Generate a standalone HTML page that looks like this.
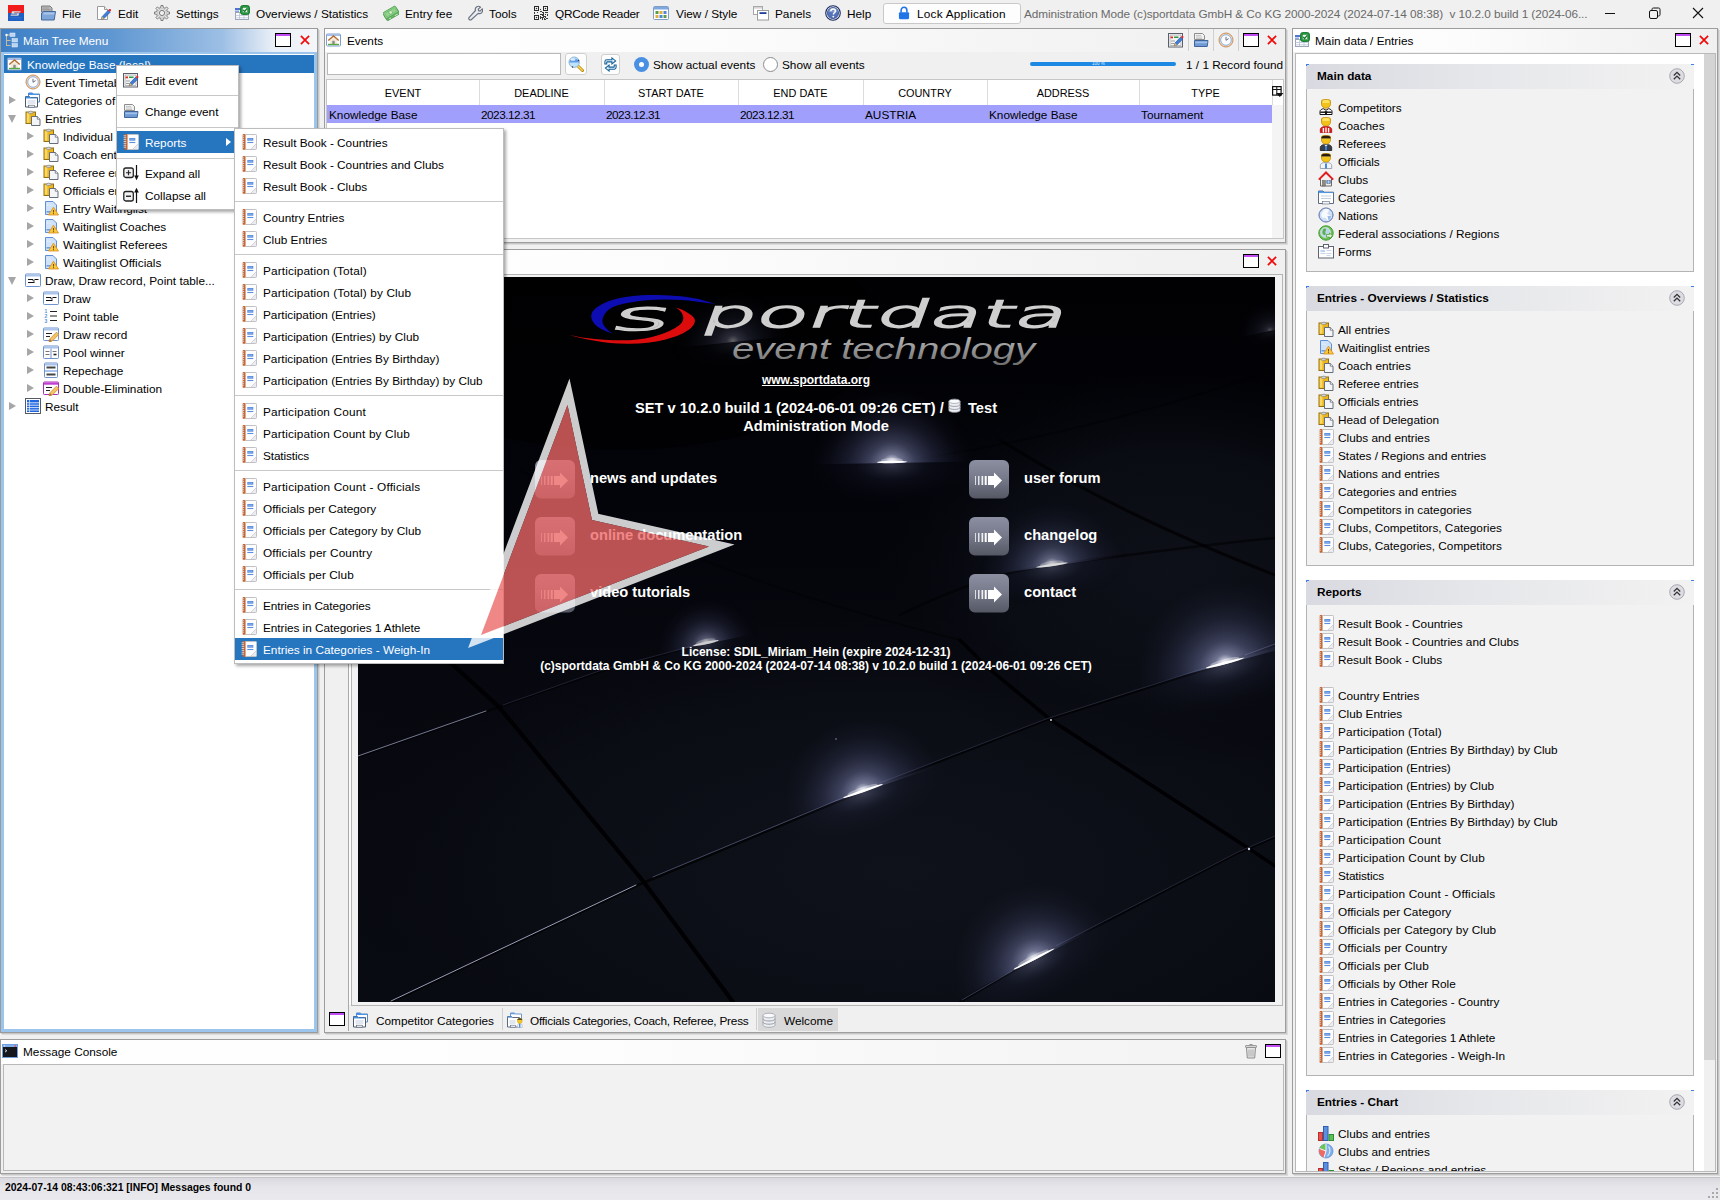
<!DOCTYPE html>
<html lang="en"><head><meta charset="utf-8"><title>sportdata SET</title>
<style>
*{box-sizing:border-box;margin:0;padding:0}
html,body{width:1720px;height:1200px;overflow:hidden;background:#f0f0f0}
body{font-family:"Liberation Sans",sans-serif;font-size:11.8px;color:#000;position:relative;line-height:1}
.a{position:absolute}
.t{position:absolute;white-space:nowrap;line-height:16px;height:16px}
.ic{position:absolute;width:16px;height:16px;overflow:visible}
svg{display:block}
/* top bar */
#top{left:0;top:0;width:1720px;height:28px;background:#f0f0f0}
#lock{left:883px;top:3px;width:138px;height:21px;background:#fdfdfd;border:1px solid #c9c9c9;border-radius:3px}
/* generic panel */
.panel{position:absolute;background:#f0f0f0;border:1px solid #9d9d9d;box-shadow:1px 1px 0 #c6c6c6,2px 2px 0 #dcdcdc}
.hdr{position:absolute;left:0;top:0;right:0;height:23px;background:linear-gradient(90deg,#ffffff 0%,#fcfcfc 40%,#f5f5f5 70%,#f0f0f0 100%)}
.box{position:absolute;background:#fff;border:1px solid #b9b9b9}
/* left tree */
#lp{border-color:#9a9a9a;background:#9cc5ee}
#lp .hdr{background:linear-gradient(90deg,#3d7fc6 0%,#5f97d2 35%,#9dbfe5 70%,#e9eff7 86%,#f4f6f9 100%);height:23px}
#tree{left:3px;top:25px;width:310px;height:976px;background:#fff;border:1px solid #fdfdfd}
.row{position:absolute;left:0;height:18px;width:308px}
.sel{background:#2675bf;color:#fff}
.tw{position:absolute;width:0;height:0}
.tw.r{border-left:7.5px solid #a6a6a6;border-top:4.5px solid transparent;border-bottom:4.5px solid transparent}
.tw.d{border-top:8px solid #a6a6a6;border-left:4.5px solid transparent;border-right:4.5px solid transparent}
/* menus */
.menu{position:absolute;background:#fff;border:1px solid #bdbdbd;box-shadow:2px 2px 3px rgba(0,0,0,.35)}
.mi{position:absolute;left:0;right:0;height:22px}
.mi.hl{background:#2675bf;color:#fff}
.sep{position:absolute;left:0;right:0;height:1px;background:#c8c8c8}
/* events */
.th{position:absolute;top:0;height:25px;line-height:26px;text-align:center;font-size:10.9px}
.td{position:absolute;top:0;height:18px;line-height:18px;white-space:nowrap}
.btn{position:absolute;background:#f7f7f7;border:1px solid #cfcfcf;border-radius:3px}
/* task groups */
.gh{position:absolute;left:12px;width:388px;height:25px;background:linear-gradient(90deg,#d9dae1 0%,#e6e7ea 45%,#f2f2f2 100%);font-weight:bold;font-size:11.8px}
.gb{position:absolute;left:12px;width:388px;background:#f2f2f2;border:1px solid #b4b4b4;border-top:none}
.gi{position:absolute;left:0;height:18px;width:380px}
.cb{position:absolute;width:15px;height:15px}
/* welcome */
#wel{left:358px;top:277px;width:917px;height:725px;background:#04050a;overflow:hidden;color:#fff;font-weight:bold}
.wt{position:absolute;white-space:nowrap;color:#fff;font-weight:bold}
</style></head>
<body>
<svg width="0" height="0" style="position:absolute"><defs><symbol id="i-logo" viewBox="0 0 16 16"><rect x="0" y="0" width="16" height="8" fill="#f11b1b"/><rect x="0" y="8" width="16" height="8" fill="#1f5fc4"/>
<path d="M4 6.2h8.8l-.6 1.3H6.4l-.3.8h5.2l-1 2.4H2.6l.5-1.2h5.8l.3-.8H3.4z" fill="#e8e8ee" stroke="#8a8a9a" stroke-width=".3"/>
<path d="M2 12.5h12M3 14h10" stroke="#4f86dd" stroke-width=".6" stroke-dasharray="1 .6"/></symbol><symbol id="i-folder" viewBox="0 0 16 16"><path d="M1.500 1h8.500l2 2v4h-10.500z" fill="#b9b9b9" stroke="#7d7d7d" stroke-width="1"/>
<path d="M2.500 3h6.500M2.500 4.500h8M2.500 6h8" stroke="#8f8f8f" stroke-width=".7"/>
<path d="M3.500 6.500h12l-1.300 8.500H1.500V8z" fill="#7fa6d8" stroke="#44689a" stroke-width="1" stroke-linejoin="round"/>
<path d="M4 7.500h10.500l-.3 2H3.300z" fill="#a9c6ea"/></symbol><symbol id="i-edit" viewBox="0 0 16 16"><path d="M2.5 1.5h7l3 3v10h-10z" fill="#fff" stroke="#9b9b9b" stroke-width="1"/>
<path d="M9.5 1.5v3h3" fill="#f1f1f1" stroke="#9b9b9b" stroke-width="1"/>
<path d="M13.2 5.2l2 2L9 13.6l-2.6 .8.7-2.7z" fill="#3f7fd8" stroke="#2a5aa8" stroke-width=".7"/>
<path d="M13.2 5.2l.9-.9c.5-.5 1.1-.5 1.6 0s.5 1.1 0 1.6l-.6.9z" fill="#e8232a"/>
<path d="M6.4 14.4l.7-2.7 1.9 1.9z" fill="#f3c77b" stroke="#b98a3a" stroke-width=".4"/></symbol><symbol id="i-gear" viewBox="0 0 16 16"><path d="M13.47 6.82L15.53 6.99L15.53 9.01L13.47 9.18L12.70 11.04L14.04 12.61L12.61 14.04L11.04 12.70L9.18 13.47L9.01 15.53L6.99 15.53L6.82 13.47L4.96 12.70L3.39 14.04L1.96 12.61L3.30 11.04L2.53 9.18L0.47 9.01L0.47 6.99L2.53 6.82L3.30 4.96L1.96 3.39L3.39 1.96L4.96 3.30L6.82 2.53L6.99 0.47L9.01 0.47L9.18 2.53L11.04 3.30L12.61 1.96L14.04 3.39L12.70 4.96Z" fill="#e9e9e9" stroke="#6f6f6f" stroke-width=".9" stroke-linejoin="round"/>
<circle cx="8" cy="8" r="4.300" fill="none" stroke="#b5b5b5" stroke-width=".8"/>
<circle cx="8" cy="8" r="2.600" fill="#f0f0f0" stroke="#6f6f6f" stroke-width=".9"/></symbol><symbol id="i-overview" viewBox="0 0 16 16"><rect x="1.5" y="7.5" width="13" height="7" fill="#fff" stroke="#9aa4b8"/>
<path d="M1.5 10.5h13M1.5 12.8h13M5.5 7.5v7M10 7.5v7" stroke="#b9c3d6" stroke-width=".8"/>
<rect x="1" y="3.2" width="5" height="1.6" fill="#2a55c8"/><rect x="1" y="5.6" width="4" height="1.2" fill="#6f8fdc"/>
<rect x="6.5" y=".5" width="9" height="9" rx="2.2" fill="#1f9a3a" stroke="#0c6a22" stroke-width=".8"/>
<rect x="8.3" y="2.3" width="5.4" height="5.4" fill="#e9f7ea" stroke="#0c6a22" stroke-width=".5"/>
<path d="M9.2 5l1.4 1.5 2.6-3.2" fill="none" stroke="#0f7a28" stroke-width="1.2"/></symbol><symbol id="i-fee" viewBox="0 0 16 16"><g transform="rotate(-30 8 8)"><rect x=".8" y="6" width="14.400" height="7" rx="1" fill="#69b866" stroke="#4a9a4c" stroke-width=".8"/>
<rect x=".8" y="3.800" width="14.400" height="7" rx="1" fill="#93d48e" stroke="#4f9f50" stroke-width=".8"/>
<rect x="2.300" y="5.200" width="11.400" height="4.200" fill="none" stroke="#6ab868" stroke-width=".6"/>
<circle cx="8" cy="7.300" r="1.800" fill="#d5f0d0" stroke="#58aa58" stroke-width=".6"/>
<path d="M3.500 12.300h2M10 12.300h3" stroke="#d5f0d0" stroke-width=".9"/></g></symbol><symbol id="i-tools" viewBox="0 0 16 16"><path d="M10.300 1.200c1.300-.6 3-.4 4 .5l-2.400 2.200.4 1.600 1.600.4 2.200-2.300c.7 1.200.6 2.800-.4 3.900-1 1.100-2.500 1.400-3.800.9L4.600 15c-.7.700-1.700.700-2.400 0s-.7-1.700 0-2.400l6.700-7.300c-.5-1.500.1-3.300 1.400-4.100z" transform="scale(.93) translate(.2 .6)" fill="#e9edf3" stroke="#6c737e" stroke-width="1.250"/></symbol><symbol id="i-qr" viewBox="0 0 16 16"><rect x="1.5" y="1.5" width="4" height="4" fill="#fff" stroke="#2a2a2a" stroke-width="1"/><rect x="2.8" y="2.8" width="1.400" height="1.400" fill="#2a2a2a"/><rect x="10.5" y="1.5" width="4" height="4" fill="#fff" stroke="#2a2a2a" stroke-width="1"/><rect x="11.8" y="2.8" width="1.400" height="1.400" fill="#2a2a2a"/><rect x="1.5" y="10.5" width="4" height="4" fill="#fff" stroke="#2a2a2a" stroke-width="1"/><rect x="2.8" y="11.8" width="1.400" height="1.400" fill="#2a2a2a"/><rect x="7" y="4" width="1" height="1" fill="#3a3a3a"/><rect x="7" y="6" width="1" height="1" fill="#3a3a3a"/><rect x="8" y="6" width="1" height="1" fill="#3a3a3a"/><rect x="1" y="7" width="1" height="1" fill="#3a3a3a"/><rect x="4" y="7" width="1" height="1" fill="#3a3a3a"/><rect x="9" y="7" width="1" height="1" fill="#3a3a3a"/><rect x="10" y="7" width="1" height="1" fill="#3a3a3a"/><rect x="12" y="7" width="1" height="1" fill="#3a3a3a"/><rect x="13" y="7" width="1" height="1" fill="#3a3a3a"/><rect x="14" y="7" width="1" height="1" fill="#3a3a3a"/><rect x="1" y="8" width="1" height="1" fill="#3a3a3a"/><rect x="10" y="8" width="1" height="1" fill="#3a3a3a"/><rect x="7" y="9" width="1" height="1" fill="#3a3a3a"/><rect x="8" y="9" width="1" height="1" fill="#3a3a3a"/><rect x="9" y="9" width="1" height="1" fill="#3a3a3a"/><rect x="10" y="9" width="1" height="1" fill="#3a3a3a"/><rect x="12" y="9" width="1" height="1" fill="#3a3a3a"/><rect x="14" y="9" width="1" height="1" fill="#3a3a3a"/><rect x="9" y="10" width="1" height="1" fill="#3a3a3a"/><rect x="10" y="10" width="1" height="1" fill="#3a3a3a"/><rect x="14" y="10" width="1" height="1" fill="#3a3a3a"/><rect x="7" y="11" width="1" height="1" fill="#3a3a3a"/><rect x="10" y="11" width="1" height="1" fill="#3a3a3a"/><rect x="11" y="11" width="1" height="1" fill="#3a3a3a"/><rect x="12" y="11" width="1" height="1" fill="#3a3a3a"/><rect x="7" y="12" width="1" height="1" fill="#3a3a3a"/><rect x="8" y="12" width="1" height="1" fill="#3a3a3a"/><rect x="9" y="12" width="1" height="1" fill="#3a3a3a"/><rect x="10" y="12" width="1" height="1" fill="#3a3a3a"/><rect x="12" y="12" width="1" height="1" fill="#3a3a3a"/><rect x="7" y="13" width="1" height="1" fill="#3a3a3a"/><rect x="9" y="13" width="1" height="1" fill="#3a3a3a"/><rect x="11" y="13" width="1" height="1" fill="#3a3a3a"/><rect x="13" y="13" width="1" height="1" fill="#3a3a3a"/><rect x="14" y="13" width="1" height="1" fill="#3a3a3a"/><rect x="9" y="14" width="1" height="1" fill="#3a3a3a"/><rect x="11" y="14" width="1" height="1" fill="#3a3a3a"/><rect x="12" y="14" width="1" height="1" fill="#3a3a3a"/></symbol><symbol id="i-view" viewBox="0 0 16 16"><rect x=".5" y="1.5" width="15" height="13" rx="1" fill="#fff" stroke="#7f9cc4"/>
<rect x="1" y="2" width="14" height="2.500" fill="#7fa8e0"/>
<rect x="2.500" y="6" width="3" height="3" fill="#5d9a4a"/><rect x="6.500" y="6" width="3" height="3" fill="#e0b23a"/><rect x="10.500" y="6" width="3" height="3" fill="#4f86d8"/>
<rect x="2.500" y="10" width="3" height="3" fill="#e0b23a"/><rect x="6.500" y="10" width="3" height="3" fill="#4f86d8"/><rect x="10.500" y="10" width="3" height="3" fill="#5d9a4a"/></symbol><symbol id="i-panels" viewBox="0 0 16 16"><rect x=".5" y="1.500" width="9" height="8" fill="#fff" stroke="#a8a8a8"/><rect x="1" y="2" width="8" height="1.600" fill="#d4d4d4"/>
<rect x="4.500" y="5.500" width="11" height="9.500" fill="#fff" stroke="#9a9a9a"/><rect x="6.500" y="7.200" width="7" height="1.800" fill="#1c3f9c"/></symbol><symbol id="i-help" viewBox="0 0 16 16"><circle cx="8" cy="8" r="7.300" fill="#e4e9f4" stroke="#1a2a5c" stroke-width="1.100"/><circle cx="8" cy="8" r="5.600" fill="#5573b8" stroke="#2c4688" stroke-width=".7"/>
<path d="M3.200 6.500a5 5 0 0 1 9.600 0c-2 1.200-7.600 1.200-9.600 0z" fill="#8fa6d8" opacity=".7"/>
<path d="M5.800 6.300c0-1.400 1-2.300 2.300-2.300s2.300.8 2.300 2c0 1.700-2 1.700-2 3.400" fill="none" stroke="#fff" stroke-width="1.500"/><circle cx="8.300" cy="11.600" r=".95" fill="#fff"/></symbol><symbol id="i-lock" viewBox="0 0 16 16"><path d="M4.700 7.500V5c0-2 1.300-3.500 3.300-3.500s3.300 1.500 3.300 3.500v2.500" fill="none" stroke="#1f74e8" stroke-width="1.800"/>
<rect x="2.200" y="7" width="11.600" height="8" rx="1.300" fill="#1f74e8"/></symbol><symbol id="i-treeic" viewBox="0 0 16 16"><path d="M2.500 3v11M2.500 8.500h4M2.500 13.500h4M2.500 3h4" stroke="#c9b9a0" stroke-width="1" fill="none"/>
<circle cx="2.500" cy="3" r="1.200" fill="#fff"/>
<rect x="6" y="1" width="5" height="3.500" fill="#b9d3f3" stroke="#e8f0fb" stroke-width=".5"/>
<rect x="8" y="6.500" width="5.500" height="3.500" fill="#b9d3f3" stroke="#e8f0fb" stroke-width=".5"/>
<rect x="8" y="11.500" width="5.500" height="3.500" fill="#b9d3f3" stroke="#e8f0fb" stroke-width=".5"/></symbol><symbol id="i-home" viewBox="0 0 16 16"><rect x=".5" y="2" width="14" height="12" rx="1" fill="#fff" stroke="#7f9fd0" stroke-width="1"/>
<rect x="1" y="2.300" width="13" height="1.600" fill="#9db9e6"/>
<path d="M2.300 8.500L7.500 4l5.200 4.500" fill="none" stroke="#b26a2e" stroke-width="1.500"/>
<path d="M4 8.200L7.500 5.200 11 8.200V12H4z" fill="#f4e9d8"/>
<rect x="6.300" y="8.800" width="2.400" height="3.200" fill="#8a8a8a"/>
<rect x="2" y="11.800" width="11" height="1.400" fill="#58a844"/></symbol><symbol id="i-clock" viewBox="0 0 16 16"><circle cx="8" cy="8" r="7" fill="#f3dcc2" stroke="#c98f55" stroke-width="1"/>
<circle cx="8" cy="8" r="5.300" fill="#fafcff" stroke="#8fb0e0" stroke-width="1"/>
<path d="M8 4.800V8.300L10.600 6.600" fill="none" stroke="#6a6a7a" stroke-width="1"/></symbol><symbol id="i-cats" viewBox="0 0 16 16"><path d="M3.500 1h4l.8 1H14.500v8h-11z" fill="#fff" stroke="#5f86c0" stroke-width="1"/>
<path d="M3.500 1h4l.8 1.500H3.500z" fill="#3f8fe8"/><path d="M4 2.500h10" stroke="#3f8fe8" stroke-width=".9"/>
<path d="M.5 4.500h4l.8 1H12.500v9.500H.5z" fill="#fff" stroke="#4d586c" stroke-width="1"/>
<path d="M.5 4.500h4l.8 1.500H.5z" fill="#3f8fe8"/><path d="M1 6h11" stroke="#3f8fe8" stroke-width=".9"/>
<path d="M2.500 9h8M2.500 11h8" stroke="#c3cde0" stroke-width="1"/>
<rect x="3.500" y="13.200" width="6" height="2" fill="#f4f6fa" stroke="#4d586c" stroke-width=".6"/></symbol><symbol id="i-clip" viewBox="0 0 16 16"><rect x="1" y="2" width="9.500" height="11.500" fill="#ecb51c" stroke="#94700e" stroke-width="1"/>
<rect x="1.800" y="2.800" width="2.600" height="9.900" fill="#f8d968"/>
<path d="M3.500 2.300c0-1.500 4.500-1.500 4.500 0v.9H3.500z" fill="#e8eaf0" stroke="#777d8a" stroke-width=".7"/>
<path d="M6.500 6.500h5.800l2.700 2.700V15.500H6.500z" fill="#f4f5f8" stroke="#666c78" stroke-width="1"/>
<path d="M12.300 6.500v2.700H15" fill="#fff" stroke="#666c78" stroke-width=".8"/></symbol><symbol id="i-wait" viewBox="0 0 16 16"><path d="M2.500 1.500h7.500l3.500 3.500v9.500h-11z" fill="#cfe2f8" stroke="#5f8fd6" stroke-width="1"/>
<path d="M4 4h3M4 5.500h4" stroke="#e9f2fc" stroke-width=".8" stroke-dasharray="1 .6"/>
<rect x="3.500" y="11" width="4" height="1.600" fill="#6fa0e0"/>
<path d="M10.500 7.200L15.500 15H5.500z" fill="#f8c93a" stroke="#d98a1e" stroke-width=".8" stroke-linejoin="round"/>
<path d="M10.500 10v2.500" stroke="#7a4a10" stroke-width="1.100"/><circle cx="10.500" cy="13.700" r=".6" fill="#7a4a10"/></symbol><symbol id="i-draw" viewBox="0 0 16 16"><rect x=".5" y="2" width="15" height="12.500" rx=".8" fill="#fff" stroke="#6f93cc" stroke-width="1"/>
<rect x="1" y="2.500" width="14" height="2" fill="#a9c4ec"/>
<path d="M3 7.500h5M9.500 7.500h4M3 10.500h4M6.500 10.500h3" stroke="#111" stroke-width="1.200"/>
<path d="M8 7.500v1.500h2" stroke="#111" stroke-width=".8" fill="none"/></symbol><symbol id="i-points" viewBox="0 0 16 16"><path d="M7 3.500h7M7 8h7M7 12.500h7" stroke="#222" stroke-width="1.200"/>
<g font-family="Liberation Sans,sans-serif" font-size="5" font-weight="bold" fill="#5b8fdc"><text x="1.500" y="5">1</text><text x="1.500" y="9.800">2</text><text x="1.500" y="14.500">3</text></g></symbol><symbol id="i-drawrec" viewBox="0 0 16 16"><rect x=".5" y="2" width="15" height="12.500" rx=".8" fill="#fff" stroke="#6f93cc" stroke-width="1"/>
<rect x="1" y="2.500" width="14" height="2" fill="#a9c4ec"/>
<path d="M3 7.500h6M3 10.500h4" stroke="#222" stroke-width="1.200"/>
<g transform="translate(5 6)"><path d="M8.500 .2l2.300 2.300-6.500 6.500-3.300 1 1-3.300z" fill="#f3c466" stroke="#c9892e" stroke-width=".8"/><path d="M1 10l.9-2.900 2 2z" fill="#a8703a"/></g></symbol><symbol id="i-pool" viewBox="0 0 16 16"><rect x=".5" y="2" width="15" height="12.500" rx=".8" fill="#fff" stroke="#6f93cc" stroke-width="1"/>
<rect x="1" y="2.500" width="14" height="2" fill="#a9c4ec"/><path d="M8 4.500v10" stroke="#6f93cc" stroke-width="1"/>
<path d="M2.500 7.500h4M2.500 10.500h4M9.500 7.500h4" stroke="#777" stroke-width="1.200"/><path d="M10.500 10.500h3" stroke="#222" stroke-width="1.600"/></symbol><symbol id="i-repe" viewBox="0 0 16 16"><rect x="1.500" y="1" width="13" height="14.500" rx=".8" fill="#fff" stroke="#6f93cc" stroke-width="1"/>
<rect x="2" y="1.500" width="12" height="2" fill="#a9c4ec"/><rect x="2" y="8" width="12" height="2" fill="#a9c4ec"/>
<path d="M3.500 5.500h9M3.500 12.500h9" stroke="#444" stroke-width="1.800"/></symbol><symbol id="i-delim" viewBox="0 0 16 16"><rect x=".5" y="2" width="15" height="12.500" rx=".8" fill="#fff" stroke="#a62fb8" stroke-width="1"/>
<rect x="1" y="2.500" width="14" height="2.200" fill="#c23fd2"/>
<path d="M3 7.500h6M3 10.500h4" stroke="#222" stroke-width="1.200"/>
<g transform="translate(5 6)"><path d="M8.500 .2l2.300 2.300-6.500 6.500-3.300 1 1-3.300z" fill="#f3c466" stroke="#c9892e" stroke-width=".8"/><path d="M1 10l.9-2.900 2 2z" fill="#a8703a"/></g></symbol><symbol id="i-result" viewBox="0 0 16 16"><rect x=".5" y=".5" width="15" height="15" fill="#fff" stroke="#555b66" stroke-width="1"/>
<rect x="2" y="2" width="12" height="12" fill="#1f66e0"/>
<path d="M2 4.800h12M2 7.200h12M2 9.600h12M2 12h12" stroke="#e6eefc" stroke-width=".9"/><path d="M4.500 2v12" stroke="#e6eefc" stroke-width=".7"/></symbol><symbol id="i-editev" viewBox="0 0 16 16"><rect x=".5" y="1.500" width="14" height="13.500" fill="#fff" stroke="#5a5f68" stroke-width="1"/>
<rect x="2" y="3" width="11" height="10.500" fill="#f4f4f4" stroke="#8a8f98" stroke-width=".6"/>
<rect x="2.500" y="4.500" width="2.500" height="1.800" fill="#e02828"/><rect x="6" y="4.500" width="4.500" height="1.500" fill="#2f9a3f"/>
<path d="M3 9h4M3 11.500h3" stroke="#9a9fa8" stroke-width="1"/>
<g transform="translate(4.500 3.500)"><path d="M8.200 1.600l2 2-5.800 5.800-2.600.8.700-2.700z" fill="#3f7fd8" stroke="#2a5aa8" stroke-width=".7"/><path d="M8.200 1.600l.9-.9c.5-.5 1.100-.5 1.600 0s.5 1.100 0 1.600l-.6.9z" fill="#e8232a"/><path d="M1.800 10.200l.7-2.700 1.900 1.900z" fill="#f3c77b" stroke="#b98a3a" stroke-width=".4"/></g></symbol><symbol id="i-chgev" viewBox="0 0 16 16"><path d="M1.500 1.500h8l2 2v4h-10z" fill="#f1f1f1" stroke="#8d8d8d" stroke-width="1"/>
<path d="M3 3.500h5M3 5h6M3 6.500h6" stroke="#b5b5b5" stroke-width=".7"/>
<path d="M1.500 8.500h13.500l-.8 6H1.500z" fill="#6f9ad4" stroke="#3f659a" stroke-width="1" stroke-linejoin="round"/>
<path d="M2.300 9.500h12l-.2 1.800H2.300z" fill="#9fc0ea"/></symbol><symbol id="i-report" viewBox="0 0 16 16"><rect x="4" y=".5" width="11.500" height="15" rx=".8" fill="#fdfdfd" stroke="#c0c0c5" stroke-width="1"/>
<path d="M15 10.200L10.200 15h4.800z" fill="#ececf0"/><path d="M15.300 9.700L9.700 15.300" stroke="#cfcfd4" stroke-width=".9"/>
<rect x="1.600" y="0" width="2.800" height="15.800" rx=".9" fill="#c9622b"/>
<path d="M.6 1.800h2.500M.6 3.700h2.500M.6 5.600h2.500M.6 7.500h2.500M.6 9.400h2.500M.6 11.300h2.500M.6 13.200h2.500" stroke="#dadada" stroke-width=".9"/>
<rect x="6.300" y="4" width="6" height="2.700" fill="#5b8fe0"/><path d="M7.200 5.350h4.200" stroke="#93b6ee" stroke-width=".8"/>
<path d="M6.300 8.500h6" stroke="#5b8fe0" stroke-width="1.100"/></symbol><symbol id="i-expand" viewBox="0 0 16 16"><rect x=".8" y="3" width="9.500" height="9.500" rx="2" fill="#f2f2f2" stroke="#222" stroke-width="1.300"/>
<path d="M3 7.750h5M5.500 5.250v5" stroke="#222" stroke-width="1.200"/>
<path d="M13.500 0v11.500" stroke="#111" stroke-width="1.200"/><path d="M11.200 10.500h4.600l-2.300 4.700z" fill="#111"/></symbol><symbol id="i-collapse" viewBox="0 0 16 16"><rect x=".8" y="4.500" width="9.500" height="9.500" rx="2" fill="#f2f2f2" stroke="#222" stroke-width="1.300"/>
<path d="M3 9.250h5" stroke="#222" stroke-width="1.400"/>
<path d="M13.500 4.500v11.500" stroke="#111" stroke-width="1.200"/><path d="M11.200 5.500h4.600l-2.300-4.700z" fill="#111"/></symbol><symbol id="i-max" viewBox="0 0 16 14"><rect x=".5" y=".5" width="15" height="13" fill="#fff" stroke="#000" stroke-width="1"/><rect x="1" y="1" width="14" height="2" fill="#c34df5"/><path d="M0 13.600h16" stroke="#000" stroke-width=".5"/></symbol><symbol id="i-x" viewBox="0 0 10 10"><path d="M.9 .9l8.200 8.200M9.100 .9L.9 9.100" stroke="#f20808" stroke-width="1.700" stroke-linecap="butt"/></symbol><symbol id="i-comp" viewBox="0 0 16 16"><path d="M3.500 1.800c0-1.700 9-1.700 9 0v3.400c0 1.600-1.700 4-4.500 4s-4.500-2.400-4.500-4z" fill="#f2c21a" stroke="#c48a08" stroke-width=".8"/>
<path d="M4.600 1.900c.6-1 5.600-1.100 6.800-.1v2.200H4.600z" fill="#fbe15e"/><path d="M2 15.500v-3c0-1.600 2-2.600 3.400-2.800L8 11.300l2.600-1.600c1.400.2 3.400 1.200 3.400 2.800v3z" fill="#fff" stroke="#111" stroke-width="1"/>
<path d="M2.300 13.200h11.400" stroke="#111" stroke-width="1.400"/><path d="M6.600 12.200h2.800l-.5 2.700H7.100z" fill="#111"/></symbol><symbol id="i-coach" viewBox="0 0 16 16"><path d="M3.500 1.800c0-1.700 9-1.700 9 0v3.400c0 1.600-1.700 4-4.500 4s-4.500-2.400-4.500-4z" fill="#f2c21a" stroke="#c48a08" stroke-width=".8"/>
<path d="M4.600 1.900c.6-1 5.600-1.100 6.800-.1v2.200H4.600z" fill="#fbe15e"/><path d="M2.300 15.500v-3c0-1.600 2-2.800 3.400-2.800h4.600c1.400 0 3.400 1.200 3.400 2.800v3z" fill="#e01818" stroke="#b00c0c" stroke-width=".8"/>
<path d="M5.400 11v4.500M8 10.500v5M10.600 11v4.500" stroke="#fff" stroke-width="1.400"/></symbol><symbol id="i-ref" viewBox="0 0 16 16"><path d="M3.500 1.800c0-1.700 9-1.700 9 0v3.400c0 1.600-1.700 4-4.500 4s-4.500-2.400-4.500-4z" fill="#f2c21a" stroke="#c48a08" stroke-width=".8"/>
<path d="M4.600 1.900c.6-1 5.600-1.100 6.800-.1v2.200H4.600z" fill="#fbe15e"/><path d="M3.600 3.400V2.200c0-1.800 8.800-1.800 8.800 0v1.200z" fill="#2a1c0c"/><path d="M2.300 15.500v-3c0-1.600 2-2.800 3.400-2.800h4.600c1.400 0 3.400 1.200 3.400 2.800v3z" fill="#3a3f4a" stroke="#15181f" stroke-width=".8"/>
<path d="M6.200 9.800L8 11.700l1.800-1.900" fill="#e6ebf5"/><path d="M8 11v4.500" stroke="#3f8fe8" stroke-width="1.700"/></symbol><symbol id="i-off" viewBox="0 0 16 16"><path d="M3.500 1.800c0-1.700 9-1.700 9 0v3.400c0 1.600-1.700 4-4.500 4s-4.500-2.400-4.500-4z" fill="#f2c21a" stroke="#c48a08" stroke-width=".8"/>
<path d="M4.600 1.900c.6-1 5.600-1.100 6.800-.1v2.200H4.600z" fill="#fbe15e"/><path d="M3.600 3.400V2.200c0-1.800 8.800-1.800 8.800 0v1.200z" fill="#2a1c0c"/><path d="M2.300 15.500v-3c0-1.600 2-2.800 3.400-2.800h4.600c1.400 0 3.400 1.200 3.400 2.800v3z" fill="#f1f3f8" stroke="#8a90a0" stroke-width=".8"/>
<path d="M8 10.600v4.900" stroke="#2f7fe0" stroke-width="1.800"/></symbol><symbol id="i-club" viewBox="0 0 16 16"><path d="M2.500 8v7h11V8" fill="#f3f1ec" stroke="#6a6a6a" stroke-width="1"/>
<path d="M.8 8.600L8 1.500l7.200 7.100" fill="none" stroke="#e02020" stroke-width="2" stroke-linejoin="miter"/>
<rect x="4.500" y="9.500" width="2.800" height="5.500" fill="#8d8a80" stroke="#5a5850" stroke-width=".5"/>
<rect x="8.800" y="9.500" width="3.500" height="3" fill="#7fa6dc" stroke="#4a6a9a" stroke-width=".6"/><path d="M10.550 9.500v3" stroke="#e9f0fb" stroke-width=".6"/></symbol><symbol id="i-cat1" viewBox="0 0 16 16"><path d="M.5 2h4.500l1 1.200H15.500v11.300H.5z" fill="#fff" stroke="#5d6a80" stroke-width="1"/>
<path d="M.5 2h4.500l1 1.400H.5z" fill="#3f8fe8"/><path d="M1 3.600h14" stroke="#3f8fe8" stroke-width=".8"/>
<path d="M3 7h10M3 9.500h10" stroke="#c3cde0" stroke-width="1.200"/>
<rect x="4.500" y="12.500" width="7" height="2.500" fill="#f4f6fa" stroke="#5d6a80" stroke-width=".6"/></symbol><symbol id="i-nation" viewBox="0 0 16 16"><circle cx="8" cy="8" r="7" fill="#cfe0f6" stroke="#6a7fb0" stroke-width="1"/>
<path d="M8 1.500c2.500.5 3.500 2 2.500 3s-1.500 2-.5 3 3 .5 3 2.500-1.500 3.500-3 3.500-1-2-2.500-2.500-2.500.5-3.500-1S3 6 4.500 5s1-3 3.500-3.500z" fill="#f7fafe"/>
<path d="M9.500 9h3.500c0 2-1 3.500-2.500 4.500z" fill="#9dbbe8"/>
<circle cx="8" cy="8" r="7" fill="none" stroke="#7a8fc0" stroke-width=".6"/></symbol><symbol id="i-fed" viewBox="0 0 16 16"><circle cx="8" cy="8" r="7.200" fill="#6fc05a" stroke="#3f9a30" stroke-width="1"/>
<circle cx="7.500" cy="7.500" r="5" fill="#b8d4ee" stroke="#dff0d8" stroke-width=".6"/>
<path d="M5.500 4c1.500-1 3 0 2.500 1.200S6.500 7 7.500 8s-.5 2.500-1.500 2-2-2-1.500-3.500S4.500 4.800 5.500 4z" fill="#5fae4a"/>
<path d="M8.500 9.500h3V8l3 2.800-3 2.800v-1.500h-3z" fill="#dff3d6" stroke="#3f9a30" stroke-width=".7"/></symbol><symbol id="i-forms" viewBox="0 0 16 16"><rect x=".5" y="3.500" width="15" height="11.500" fill="#fdfdfe" stroke="#5d6370" stroke-width="1"/>
<rect x="5.500" y="1.500" width="5" height="3.500" fill="#fff" stroke="#5d6370" stroke-width="1"/>
<rect x="2.500" y="7" width="4.500" height="2" fill="#bcd5f4"/><path d="M8.500 7.500h5M2.500 10.500h5M8.500 10.500h5M8.500 12.500h4" stroke="#c9d6ea" stroke-width="1"/></symbol><symbol id="i-bars" viewBox="0 0 16 16"><rect x=".5" y="7.500" width="4" height="8" fill="#e8504a" stroke="#b8302a" stroke-width="1"/>
<rect x="5.500" y="1.500" width="4.500" height="14" fill="#5b8fe0" stroke="#2f5fb0" stroke-width="1"/>
<rect x="11" y="9.500" width="4.500" height="6" fill="#5cc05a" stroke="#2f9030" stroke-width="1"/></symbol><symbol id="i-pie" viewBox="0 0 16 16"><circle cx="8" cy="8" r="7" fill="#7fb0ec" stroke="#5a8fd6" stroke-width=".8"/>
<path d="M8 8V1A7 7 0 0 0 1.500 5.500z" fill="#6cc45a"/><path d="M8 8L1.500 5.500A7 7 0 0 0 6 14.700z" fill="#f06a62"/>
<path d="M8 8V1M8 8L1.500 5.500M8 8L6 14.700" stroke="#fff" stroke-width=".9"/>
<path d="M10.500 3.500c2 2 2 7-1 9.500" stroke="#d6e6fa" stroke-width="1.200" fill="none"/></symbol><symbol id="i-search" viewBox="0 0 16 16"><path d="M9.500 9.500l5 5" stroke="#b8860b" stroke-width="3" stroke-linecap="round"/><path d="M9.800 9.800l4.500 4.500" stroke="#ffd34a" stroke-width="1.500" stroke-linecap="round"/>
<circle cx="6.200" cy="6.200" r="5.200" fill="#bfe3f8" stroke="#8fb8dc" stroke-width="1"/>
<path d="M1.300 6.500a5 5 0 0 1 9.800 0z" fill="#4f8fe8" opacity=".85"/>
<ellipse cx="5" cy="3.500" rx="2.500" ry="1.300" fill="#e9f6ff" opacity=".9"/>
<circle cx="10.500" cy="4.500" r=".7" fill="#333"/><circle cx="4.500" cy="11" r=".7" fill="#333"/></symbol><symbol id="i-refresh" viewBox="0 0 16 16"><g fill="#dff1fb" stroke="#135f96" stroke-width="1.100" stroke-linejoin="miter">
<path d="M2 7.500V5c0-1.200.8-2 2-2h5.500V1l4 3.200-4 3.200V5.200H4.500c-.3 0-.5.200-.5.500v1.800z"/>
<path d="M14 8.500v2.500c0 1.200-.8 2-2 2H6.500v2l-4-3.200 4-3.200v2.200h5c.3 0 .5-.2.5-.5V8.500z"/></g></symbol><symbol id="i-colsel" viewBox="0 0 12 12"><rect x=".6" y=".6" width="8.500" height="8.500" fill="#fff" stroke="#111" stroke-width="1.200"/><path d="M.6 3.500h8.500M4.800 .6v8.500" stroke="#111" stroke-width="1"/><path d="M4 7h7.500l-3.750 4z" fill="#111"/></symbol><symbol id="i-console" viewBox="0 0 16 16"><rect x=".5" y="1.500" width="15" height="13" fill="#15171c" stroke="#6f9fe0" stroke-width="1"/>
<rect x="1" y="2" width="14" height="2" fill="#7fb0ee"/><rect x="12.500" y="2.300" width="1.600" height="1.400" fill="#e84a4a"/><rect x="1.800" y="2.500" width="1.200" height="1" fill="#e8f0ff"/>
<path d="M3 6.500l1.800 1.300L3 9.100" stroke="#f0f0f0" stroke-width=".9" fill="none"/></symbol><symbol id="i-trash" viewBox="0 0 16 16"><path d="M3.500 4.500h9l-.8 10.500H4.300z" fill="#e6e6e6" stroke="#8a8a8a" stroke-width="1"/>
<path d="M6 6.500v7M8 6.500v7M10 6.500v7" stroke="#a5a5a5" stroke-width=".9"/>
<rect x="2.500" y="2.500" width="11" height="2" rx=".5" fill="#d6d6d6" stroke="#8a8a8a" stroke-width=".8"/>
<path d="M6 2.500c0-1.500 4-1.500 4 0" fill="none" stroke="#8a8a8a" stroke-width=".9"/></symbol><symbol id="i-db" viewBox="0 0 16 16"><path d="M2 3.500v9.500c0 1.400 2.700 2.300 6 2.300s6-.9 6-2.300V3.500" fill="#eceef2" stroke="#9a9ea8" stroke-width=".8"/>
<ellipse cx="8" cy="3.500" rx="6" ry="2.300" fill="#fafbfd" stroke="#9a9ea8" stroke-width=".8"/>
<path d="M2 6.700c0 1.400 2.700 2.300 6 2.300s6-.9 6-2.300M2 9.900c0 1.400 2.700 2.300 6 2.300s6-.9 6-2.300" fill="none" stroke="#8d919c" stroke-width=".9"/></symbol><symbol id="i-offcat" viewBox="0 0 16 16"><path d="M3.500 1h4l.8 1H14.500v8h-11z" fill="#fff" stroke="#6f96cf" stroke-width="1"/>
<path d="M3.500 1h4l.8 1.300H3.500z" fill="#5b9be0"/>
<path d="M.5 4.500h4l.8 1H12.500v9.500H.5z" fill="#fff" stroke="#5d6a80" stroke-width="1"/>
<path d="M.5 4.500h4l.8 1.300H.5z" fill="#5b9be0"/>
<path d="M2.500 9h6M2.500 11h6" stroke="#c3cde0" stroke-width="1"/>
<rect x="3.500" y="13.200" width="5" height="2" fill="#f4f6fa" stroke="#5d6a80" stroke-width=".6"/>
<path d="M10.500 7.500c0-1.300 4.500-1.300 4.500 0v2c0 1-1 2.200-2.250 2.200s-2.250-1.200-2.250-2.200z" fill="#f4c81e" stroke="#c9930a" stroke-width=".5"/>
<path d="M10.300 7.800c0-1.800 4.900-1.800 4.900 0z" fill="#2a1c0c"/>
<path d="M10.300 15.500v-2c0-1 1-1.800 2.450-1.800s2.450.8 2.450 1.800v2z" fill="#f1f3f8" stroke="#9aa0ae" stroke-width=".5"/><path d="M12.750 12v3.500" stroke="#2f7fe0" stroke-width="1.200"/></symbol></defs></svg>
<div id="top" class="a"></div>
<svg class="ic" style="left:8px;top:5px;width:16px;height:16px" viewBox="0 0 16 16"><use href="#i-logo"/></svg>
<svg class="ic" style="left:40px;top:5px;width:16px;height:16px" viewBox="0 0 16 16"><use href="#i-folder"/></svg>
<div class="t" style="left:62px;top:6px;">File</div>
<svg class="ic" style="left:95px;top:5px;width:16px;height:16px" viewBox="0 0 16 16"><use href="#i-edit"/></svg>
<div class="t" style="left:118px;top:6px;">Edit</div>
<svg class="ic" style="left:154px;top:5px;width:16px;height:16px" viewBox="0 0 16 16"><use href="#i-gear"/></svg>
<div class="t" style="left:176px;top:6px;">Settings</div>
<svg class="ic" style="left:234px;top:5px;width:16px;height:16px" viewBox="0 0 16 16"><use href="#i-overview"/></svg>
<div class="t" style="left:256px;top:6px;">Overviews / Statistics</div>
<svg class="ic" style="left:383px;top:5px;width:16px;height:16px" viewBox="0 0 16 16"><use href="#i-fee"/></svg>
<div class="t" style="left:405px;top:6px;">Entry fee</div>
<svg class="ic" style="left:467px;top:5px;width:16px;height:16px" viewBox="0 0 16 16"><use href="#i-tools"/></svg>
<div class="t" style="left:489px;top:6px;">Tools</div>
<svg class="ic" style="left:533px;top:5px;width:16px;height:16px" viewBox="0 0 16 16"><use href="#i-qr"/></svg>
<div class="t" style="left:555px;top:6px;letter-spacing:-0.269px;">QRCode Reader</div>
<svg class="ic" style="left:653px;top:5px;width:16px;height:16px" viewBox="0 0 16 16"><use href="#i-view"/></svg>
<div class="t" style="left:676px;top:6px;">View / Style</div>
<svg class="ic" style="left:753px;top:5px;width:16px;height:16px" viewBox="0 0 16 16"><use href="#i-panels"/></svg>
<div class="t" style="left:775px;top:6px;">Panels</div>
<svg class="ic" style="left:825px;top:5px;width:16px;height:16px" viewBox="0 0 16 16"><use href="#i-help"/></svg>
<div class="t" style="left:847px;top:6px;">Help</div>
<div id="lock" class="a"></div>
<svg class="ic" style="left:897px;top:6px;width:14px;height:14px" viewBox="0 0 16 16"><use href="#i-lock"/></svg>
<div class="t" style="left:917px;top:6px;letter-spacing:0.219px;">Lock Application</div>
<div class="t" style="left:1024px;top:6px;color:#6a6a6a;white-space:pre;letter-spacing:-.08px">Administration Mode (c)sportdata GmbH &amp; Co KG 2000-2024 (2024-07-14 08:38)  v 10.2.0 build 1 (2024-06...</div>
<svg class="a" style="left:1590px;top:0;width:130px;height:28px" viewBox="0 0 130 28"><path d="M15 13.500h10" stroke="#111" stroke-width="1"/><rect x="59.500" y="10.500" width="8" height="8" rx="1.500" fill="none" stroke="#111" stroke-width="1"/><path d="M62 10.500v-1c0-1 .5-1.500 1.500-1.500h5c1 0 1.500.5 1.500 1.500v5c0 1-.5 1.500-1.500 1.500h-1" fill="none" stroke="#111" stroke-width="1"/><path d="M103 8l10 10M113 8l-10 10" stroke="#111" stroke-width="1.100"/></svg>
<div id="lp" class="panel" style="left:0;top:28px;width:318px;height:1005px"><div class="hdr"></div></div>
<svg class="ic" style="left:4px;top:32px;width:16px;height:16px" viewBox="0 0 16 16"><use href="#i-treeic"/></svg>
<div class="t" style="left:23px;top:33px;color:#fff">Main Tree Menu</div>
<svg class="ic" style="left:275px;top:33px;width:16px;height:14px" viewBox="0 0 16 14"><use href="#i-max"/></svg>
<svg class="ic" style="left:300px;top:35px;width:10px;height:10px" viewBox="0 0 10 10"><use href="#i-x"/></svg>
<div class="a" style="left:4px;top:54px;width:310px;height:975px;background:#fff"></div>
<div class="a sel" style="left:4px;top:55px;width:310px;height:18px"></div>
<svg class="ic" style="left:7px;top:56px;width:16px;height:16px" viewBox="0 0 16 16"><use href="#i-home"/></svg>
<div class="t" style="left:27px;top:57px;color:#fff">Knowledge Base (local)</div>
<svg class="ic" style="left:25px;top:74px;width:16px;height:16px" viewBox="0 0 16 16"><use href="#i-clock"/></svg>
<div class="t" style="left:45px;top:75px;">Event Timetable</div>
<svg class="ic" style="left:25px;top:92px;width:16px;height:16px" viewBox="0 0 16 16"><use href="#i-cats"/></svg>
<div class="t" style="left:45px;top:93px;">Categories of the event</div>
<div class="tw r" style="left:9px;top:96px"></div>
<svg class="ic" style="left:25px;top:110px;width:16px;height:16px" viewBox="0 0 16 16"><use href="#i-clip"/></svg>
<div class="t" style="left:45px;top:111px;">Entries</div>
<div class="tw d" style="left:8px;top:115px"></div>
<svg class="ic" style="left:43px;top:128px;width:16px;height:16px" viewBox="0 0 16 16"><use href="#i-clip"/></svg>
<div class="t" style="left:63px;top:129px;">Individual entries</div>
<div class="tw r" style="left:27px;top:132px"></div>
<svg class="ic" style="left:43px;top:146px;width:16px;height:16px" viewBox="0 0 16 16"><use href="#i-clip"/></svg>
<div class="t" style="left:63px;top:147px;">Coach entries</div>
<div class="tw r" style="left:27px;top:150px"></div>
<svg class="ic" style="left:43px;top:164px;width:16px;height:16px" viewBox="0 0 16 16"><use href="#i-clip"/></svg>
<div class="t" style="left:63px;top:165px;">Referee entries</div>
<div class="tw r" style="left:27px;top:168px"></div>
<svg class="ic" style="left:43px;top:182px;width:16px;height:16px" viewBox="0 0 16 16"><use href="#i-clip"/></svg>
<div class="t" style="left:63px;top:183px;">Officials entries</div>
<div class="tw r" style="left:27px;top:186px"></div>
<svg class="ic" style="left:43px;top:200px;width:16px;height:16px" viewBox="0 0 16 16"><use href="#i-wait"/></svg>
<div class="t" style="left:63px;top:201px;">Entry Waitinglist</div>
<div class="tw r" style="left:27px;top:204px"></div>
<svg class="ic" style="left:43px;top:218px;width:16px;height:16px" viewBox="0 0 16 16"><use href="#i-wait"/></svg>
<div class="t" style="left:63px;top:219px;">Waitinglist Coaches</div>
<div class="tw r" style="left:27px;top:222px"></div>
<svg class="ic" style="left:43px;top:236px;width:16px;height:16px" viewBox="0 0 16 16"><use href="#i-wait"/></svg>
<div class="t" style="left:63px;top:237px;">Waitinglist Referees</div>
<div class="tw r" style="left:27px;top:240px"></div>
<svg class="ic" style="left:43px;top:254px;width:16px;height:16px" viewBox="0 0 16 16"><use href="#i-wait"/></svg>
<div class="t" style="left:63px;top:255px;">Waitinglist Officials</div>
<div class="tw r" style="left:27px;top:258px"></div>
<svg class="ic" style="left:25px;top:272px;width:16px;height:16px" viewBox="0 0 16 16"><use href="#i-draw"/></svg>
<div class="t" style="left:45px;top:273px;">Draw, Draw record, Point table...</div>
<div class="tw d" style="left:8px;top:277px"></div>
<svg class="ic" style="left:43px;top:290px;width:16px;height:16px" viewBox="0 0 16 16"><use href="#i-draw"/></svg>
<div class="t" style="left:63px;top:291px;">Draw</div>
<div class="tw r" style="left:27px;top:294px"></div>
<svg class="ic" style="left:43px;top:308px;width:16px;height:16px" viewBox="0 0 16 16"><use href="#i-points"/></svg>
<div class="t" style="left:63px;top:309px;">Point table</div>
<div class="tw r" style="left:27px;top:312px"></div>
<svg class="ic" style="left:43px;top:326px;width:16px;height:16px" viewBox="0 0 16 16"><use href="#i-drawrec"/></svg>
<div class="t" style="left:63px;top:327px;">Draw record</div>
<div class="tw r" style="left:27px;top:330px"></div>
<svg class="ic" style="left:43px;top:344px;width:16px;height:16px" viewBox="0 0 16 16"><use href="#i-pool"/></svg>
<div class="t" style="left:63px;top:345px;">Pool winner</div>
<div class="tw r" style="left:27px;top:348px"></div>
<svg class="ic" style="left:43px;top:362px;width:16px;height:16px" viewBox="0 0 16 16"><use href="#i-repe"/></svg>
<div class="t" style="left:63px;top:363px;">Repechage</div>
<div class="tw r" style="left:27px;top:366px"></div>
<svg class="ic" style="left:43px;top:380px;width:16px;height:16px" viewBox="0 0 16 16"><use href="#i-delim"/></svg>
<div class="t" style="left:63px;top:381px;">Double-Elimination</div>
<div class="tw r" style="left:27px;top:384px"></div>
<svg class="ic" style="left:25px;top:398px;width:16px;height:16px" viewBox="0 0 16 16"><use href="#i-result"/></svg>
<div class="t" style="left:45px;top:399px;">Result</div>
<div class="tw r" style="left:9px;top:402px"></div>
<div class="panel" style="left:324px;top:28px;width:962px;height:215px"><div class="hdr"></div></div>
<svg class="ic" style="left:326px;top:32px;width:16px;height:16px" viewBox="0 0 16 16"><use href="#i-home"/></svg>
<div class="t" style="left:347px;top:33px;">Events</div>
<svg class="ic" style="left:1168px;top:32px;width:16px;height:16px" viewBox="0 0 16 16"><use href="#i-editev"/></svg>
<svg class="ic" style="left:1193px;top:32px;width:16px;height:16px" viewBox="0 0 16 16"><use href="#i-chgev"/></svg>
<svg class="ic" style="left:1218px;top:32px;width:16px;height:16px" viewBox="0 0 16 16"><use href="#i-clock"/></svg>
<svg class="ic" style="left:1243px;top:33px;width:16px;height:14px" viewBox="0 0 16 14"><use href="#i-max"/></svg>
<svg class="ic" style="left:1267px;top:35px;width:10px;height:10px" viewBox="0 0 10 10"><use href="#i-x"/></svg>
<div class="a" style="left:1188px;top:29px;width:1px;height:22px;background:#cfcfcf"></div>
<div class="a" style="left:1213px;top:29px;width:1px;height:22px;background:#cfcfcf"></div>
<div class="a" style="left:1238px;top:29px;width:1px;height:22px;background:#cfcfcf"></div>
<div class="box" style="left:327px;top:53px;width:234px;height:22px"></div>
<div class="btn" style="left:565px;top:53px;width:22px;height:22px;background:#fdfdfd"></div>
<svg class="ic" style="left:568px;top:56px;width:16px;height:16px" viewBox="0 0 16 16"><use href="#i-search"/></svg>
<div class="btn" style="left:601px;top:54px;width:19px;height:21px;background:#fdfdfd"></div>
<svg class="ic" style="left:603px;top:57px;width:15px;height:15px" viewBox="0 0 16 16"><use href="#i-refresh"/></svg>
<div class="a" style="left:634px;top:57px;width:15px;height:15px;border-radius:50%;background:#4a90e2"></div><div class="a" style="left:639px;top:62px;width:5px;height:5px;border-radius:50%;background:#fff"></div>
<div class="t" style="left:653px;top:57px;">Show actual events</div>
<div class="a" style="left:763px;top:57px;width:15px;height:15px;border-radius:50%;background:#fff;border:1px solid #8c8c8c"></div>
<div class="t" style="left:782px;top:57px;">Show all events</div>
<div class="a" style="left:1030px;top:62px;width:146px;height:4px;border-radius:2px;background:#1e88e5"></div>
<div class="t" style="left:1092px;top:60px;font-size:4.500px;color:#dfeefc;line-height:8px;height:8px">100 %</div>
<div class="t" style="left:1186px;top:57px;">1 / 1 Record found</div>
<div class="box" style="left:326px;top:79px;width:958px;height:160px;border-color:#c6c6c6"></div>
<div class="a" style="left:1272px;top:105px;width:11px;height:133px;background:#f4f4f4"></div>
<div class="a" style="left:327px;top:105px;width:945px;height:18px;background:#a0a0fc"></div>
<div class="th" style="left:327px;top:80px;width:152px">EVENT</div>
<div class="a" style="left:479px;top:80px;width:1px;height:25px;background:#dcdcdc"></div>
<div class="td a" style="left:329px;top:106px;">Knowledge Base</div>
<div class="th" style="left:479px;top:80px;width:125px">DEADLINE</div>
<div class="a" style="left:604px;top:80px;width:1px;height:25px;background:#dcdcdc"></div>
<div class="td a" style="left:481px;top:106px;letter-spacing:-.5px;">2023.12.31</div>
<div class="th" style="left:604px;top:80px;width:134px">START DATE</div>
<div class="a" style="left:738px;top:80px;width:1px;height:25px;background:#dcdcdc"></div>
<div class="td a" style="left:606px;top:106px;letter-spacing:-.5px;">2023.12.31</div>
<div class="th" style="left:738px;top:80px;width:125px">END DATE</div>
<div class="a" style="left:863px;top:80px;width:1px;height:25px;background:#dcdcdc"></div>
<div class="td a" style="left:740px;top:106px;letter-spacing:-.5px;">2023.12.31</div>
<div class="th" style="left:863px;top:80px;width:124px">COUNTRY</div>
<div class="a" style="left:987px;top:80px;width:1px;height:25px;background:#dcdcdc"></div>
<div class="td a" style="left:865px;top:106px;">AUSTRIA</div>
<div class="th" style="left:987px;top:80px;width:152px">ADDRESS</div>
<div class="a" style="left:1139px;top:80px;width:1px;height:25px;background:#dcdcdc"></div>
<div class="td a" style="left:989px;top:106px;">Knowledge Base</div>
<div class="th" style="left:1139px;top:80px;width:133px">TYPE</div>
<div class="a" style="left:1272px;top:80px;width:1px;height:25px;background:#dcdcdc"></div>
<div class="td a" style="left:1141px;top:106px;">Tournament</div>
<svg class="ic" style="left:1272px;top:86px;width:12px;height:12px" viewBox="0 0 12 12"><use href="#i-colsel"/></svg>
<div class="panel" style="left:324px;top:249px;width:962px;height:784px"><div class="hdr" style="height:24px"></div></div>
<svg class="ic" style="left:1243px;top:254px;width:16px;height:14px" viewBox="0 0 16 14"><use href="#i-max"/></svg>
<svg class="ic" style="left:1267px;top:256px;width:10px;height:10px" viewBox="0 0 10 10"><use href="#i-x"/></svg>
<div class="a" style="left:348px;top:274px;width:1px;height:757px;background:#a9a9a9"></div>
<div class="a" style="left:349px;top:274px;width:2px;height:731px;background:#fcfcfc"></div>
<div class="a" style="left:351px;top:274px;width:932px;height:732px;border:1px solid #b5b5b5;background:#f2f2f2"></div>
<svg class="ic" style="left:329px;top:1012px;width:16px;height:14px" viewBox="0 0 16 14"><use href="#i-max"/></svg>
<div class="a" style="left:758px;top:1008px;width:80px;height:23px;background:#d9d9d9"></div>
<svg class="ic" style="left:353px;top:1012px;width:16px;height:16px" viewBox="0 0 16 16"><use href="#i-cats"/></svg>
<div class="t" style="left:376px;top:1013px;">Competitor Categories</div>
<div class="a" style="left:502px;top:1008px;width:1px;height:22px;background:#cfcfcf"></div>
<svg class="ic" style="left:507px;top:1012px;width:16px;height:16px" viewBox="0 0 16 16"><use href="#i-offcat"/></svg>
<div class="t" style="left:530px;top:1013px;letter-spacing:-.22px">Officials Categories, Coach, Referee, Press</div>
<div class="a" style="left:756px;top:1008px;width:1px;height:22px;background:#cfcfcf"></div>
<svg class="ic" style="left:761px;top:1012px;width:16px;height:16px" viewBox="0 0 16 16"><use href="#i-db"/></svg>
<div class="t" style="left:784px;top:1013px;">Welcome</div>
<svg class="a" style="left:358px;top:277px;width:917px;height:725px" viewBox="358 277 917 725"><defs>
<radialGradient id="gl"><stop offset="0" stop-color="#fff" stop-opacity=".95"/><stop offset=".04" stop-color="#eef0ff" stop-opacity=".8"/><stop offset=".11" stop-color="#c0c6f0" stop-opacity=".5"/><stop offset=".28" stop-color="#9aa2da" stop-opacity=".31"/><stop offset=".55" stop-color="#7880be" stop-opacity=".15"/><stop offset=".78" stop-color="#646eaa" stop-opacity=".05"/><stop offset="1" stop-color="#50588a" stop-opacity="0"/></radialGradient>
<radialGradient id="gl2"><stop offset="0" stop-color="#aab0e0" stop-opacity=".5"/><stop offset=".4" stop-color="#4a5288" stop-opacity=".18"/><stop offset="1" stop-color="#10142a" stop-opacity="0"/></radialGradient>
<radialGradient id="sheen" cx=".5" cy=".5" r=".5"><stop offset="0" stop-color="#10121b"/><stop offset=".6" stop-color="#0b0d15"/><stop offset="1" stop-color="#05060b" stop-opacity="0"/></radialGradient>
<linearGradient id="fade" x1="0" y1="0" x2="0" y2="1"><stop offset="0" stop-color="#010103"/><stop offset=".3" stop-color="#03040a"/><stop offset=".55" stop-color="#07080f"/><stop offset="1" stop-color="#0a0c14"/></linearGradient>
<linearGradient id="silver" x1="0" y1="0" x2="0" y2="1"><stop offset="0" stop-color="#f2f2f2"/><stop offset=".5" stop-color="#c9c9c9"/><stop offset="1" stop-color="#9a9a9a"/></linearGradient>
<linearGradient id="grey2" x1="0" y1="0" x2="0" y2="1"><stop offset="0" stop-color="#bdbdbd"/><stop offset="1" stop-color="#6f6f6f"/></linearGradient>
<linearGradient id="btn" x1="0" y1="0" x2="0" y2="1"><stop offset="0" stop-color="#8b8fa1"/><stop offset=".45" stop-color="#777b8c"/><stop offset="1" stop-color="#555864"/></linearGradient>
<clipPath id="up"><rect x="-200" y="-200" width="400" height="201"/></clipPath>
</defs><rect x="358" y="277" width="917" height="725" fill="url(#fade)"/><ellipse cx="900" cy="870" rx="640" ry="290" fill="url(#sheen)"/><ellipse cx="1170" cy="570" rx="300" ry="200" fill="url(#sheen)" opacity=".85"/><ellipse cx="620" cy="330" rx="260" ry="120" fill="#000" opacity=".5"/><g fill="none" stroke="#010103" stroke-linecap="round"><path d="M400 630L452 664L499 707L643 881L733 1002" stroke-width="4"/><path d="M960 640L987 667L1051 720L1248 848L1278 868" stroke-width="3.500"/><path d="M358 757L499 707L599 672L706 643" stroke-width="2" opacity=".7"/><path d="M391 1002L638 885L863 791L1046 720L1225 663L1275 645" stroke-width="2.500" opacity=".8"/><path d="M960 1002L1034 959L1238 853L1275 837" stroke-width="2.500" opacity=".8"/><path d="M1000 440C1080 490 1160 530 1275 575" stroke-width="3" opacity=".75"/><path d="M1275 538C1200 545 1130 555 1052 565C1000 572 950 590 900 615" stroke-width="2.500" opacity=".6"/><path d="M892 462C980 452 1130 420 1275 370" stroke-width="2" opacity=".5"/><path d="M520 470C640 540 760 590 960 640" stroke-width="2" opacity=".5"/></g><g fill="none" stroke-width="1" stroke-linecap="round"><path d="M358 756L486 711" stroke="#9aa0c0" stroke-opacity=".75"/><path d="M503 705L599 671L700 644" stroke="#4a5070" stroke-opacity=".4"/><path d="M391 1001L636 885" stroke="#b4b9d6" stroke-opacity=".85"/><path d="M653 877L845 797" stroke="#6a7095" stroke-opacity=".6"/><path d="M880 783L1046 719L1205 668" stroke="#4a5070" stroke-opacity=".45"/><path d="M1245 655L1275 644" stroke="#6a7095" stroke-opacity=".5"/><path d="M962 1000L1012 971" stroke="#6a7095" stroke-opacity=".5"/><path d="M1056 946L1238 852L1275 836" stroke="#4a5070" stroke-opacity=".45"/></g><circle cx="1051" cy="720" r="1" fill="#cfd3ea"/><circle cx="1249" cy="849" r="1.200" fill="#cfd3ea"/><circle cx="836" cy="739" r=".8" fill="#8d93b5"/><g transform="translate(892 462) rotate(-1)" opacity="1.0"><ellipse cx="0" cy="3" rx="90" ry="40" fill="url(#gl2)" opacity=".55"/><g clip-path="url(#up)"><ellipse cx="0" cy="0" rx="79" ry="72" fill="url(#gl)"/></g><ellipse cx="0" cy="-1.500" rx="11" ry="2.500" fill="#fff" opacity=".35"/><ellipse cx="0" cy="0" rx="15" ry="1.200" fill="#fff"/></g><g transform="translate(733 341) rotate(-6)" opacity="0.4"><ellipse cx="0" cy="3" rx="65" ry="29" fill="url(#gl2)" opacity=".55"/><g clip-path="url(#up)"><ellipse cx="0" cy="0" rx="57" ry="52" fill="url(#gl)"/></g></g><g transform="translate(1052 565) rotate(-8)" opacity="0.85"><ellipse cx="0" cy="3" rx="80" ry="35" fill="url(#gl2)" opacity=".55"/><g clip-path="url(#up)"><ellipse cx="0" cy="0" rx="70" ry="64" fill="url(#gl)"/></g><ellipse cx="0" cy="-1.500" rx="12" ry="2.500" fill="#fff" opacity=".35"/><ellipse cx="0" cy="0" rx="16" ry="1.200" fill="#fff"/></g><g transform="translate(1225 663) rotate(-15)" opacity="1.0"><ellipse cx="0" cy="3" rx="100" ry="44" fill="url(#gl2)" opacity=".55"/><g clip-path="url(#up)"><ellipse cx="0" cy="0" rx="88" ry="80" fill="url(#gl)"/></g><ellipse cx="0" cy="-1.500" rx="15" ry="2.500" fill="#fff" opacity=".35"/><ellipse cx="0" cy="0" rx="20" ry="1.200" fill="#fff"/></g><g transform="translate(863 791) rotate(-19)" opacity="1.0"><ellipse cx="0" cy="3" rx="90" ry="40" fill="url(#gl2)" opacity=".55"/><g clip-path="url(#up)"><ellipse cx="0" cy="0" rx="79" ry="72" fill="url(#gl)"/></g><ellipse cx="0" cy="-1.500" rx="16" ry="2.500" fill="#fff" opacity=".35"/><ellipse cx="0" cy="0" rx="21" ry="1.200" fill="#fff"/></g><g transform="translate(1034 959) rotate(-27)" opacity="1.0"><ellipse cx="0" cy="3" rx="92" ry="41" fill="url(#gl2)" opacity=".55"/><g clip-path="url(#up)"><ellipse cx="0" cy="0" rx="81" ry="74" fill="url(#gl)"/></g><ellipse cx="0" cy="-1.500" rx="17" ry="2.500" fill="#fff" opacity=".35"/><ellipse cx="0" cy="0" rx="23" ry="1.200" fill="#fff"/></g><g transform="translate(706 643) rotate(-12)" opacity="0.8"><ellipse cx="0" cy="3" rx="55" ry="24" fill="url(#gl2)" opacity=".55"/><g clip-path="url(#up)"><ellipse cx="0" cy="0" rx="48" ry="44" fill="url(#gl)"/></g><ellipse cx="0" cy="-1.500" rx="10" ry="2.500" fill="#fff" opacity=".35"/><ellipse cx="0" cy="0" rx="13" ry="1.200" fill="#fff"/></g><g transform="translate(1270 330) rotate(-12)" opacity="0.3"><ellipse cx="0" cy="3" rx="38" ry="16" fill="url(#gl2)" opacity=".55"/><g clip-path="url(#up)"><ellipse cx="0" cy="0" rx="33" ry="30" fill="url(#gl)"/></g></g><g transform="translate(565 600) rotate(-20)" opacity="0.25"><ellipse cx="0" cy="3" rx="38" ry="16" fill="url(#gl2)" opacity=".55"/><g clip-path="url(#up)"><ellipse cx="0" cy="0" rx="33" ry="30" fill="url(#gl)"/></g></g><path d="M715.800 304.200C700 298.500 688 296.800 676.300 296C664 295 652 294.800 641.400 295.200C630 295.800 620 297.500 612.300 300.100C600 304 591 310 591.200 316.400C591.500 324 600 329.500 612.300 333.300C606 329 602 324.500 602.400 319.900C603 316 605 312.500 608.800 309.400C614 305.800 621 303.800 629.800 302.400C640 300.600 652 299.700 664.700 299.500C677 299.500 688 300.300 699.500 301.900C705 302.600 710 303.200 715.800 304.200Z" fill="#0c0cb0"/><path d="M676.300 307.700C681 309 685 310.800 687.900 312.900C692 315 694.500 317.500 694.900 319.900C695.200 323.500 692.500 327 687.900 330.300C682 334.500 674 337.500 664.700 339.700C654 342.300 642 343.500 629.800 343.700C617 343.900 605 342.800 594.900 340.800C585 339 576 337 569.300 335C578 336.800 586 338.200 594.900 339.100C606 340.200 618 340.600 629.800 340.200C640 339.500 650 337.800 658.800 335C667 332.300 674 329.300 678.600 325.700C681.500 323.500 683.200 321 683.300 318.700C683.400 316 682.500 313.700 680.900 311.700C679.700 310.200 678 308.800 676.300 307.700Z" fill="#dc0c0c"/><g font-family="DejaVu Sans,Liberation Sans,sans-serif" font-weight="200" font-size="37.500" fill="url(#silver)" stroke="#cfcfcf" stroke-width="3" stroke-linejoin="miter"><text transform="translate(608 329.500) skewX(-20) scale(3.050 1.080)" x="0" y="0" vector-effect="non-scaling-stroke">s</text><text transform="translate(699.500 327) skewX(-20) scale(2.260 1)" x="0" y="0" vector-effect="non-scaling-stroke">portdata</text></g><text x="732" y="359" font-family="Liberation Sans,sans-serif" font-style="italic" font-size="29" fill="url(#grey2)" textLength="303" lengthAdjust="spacingAndGlyphs">event technology</text><rect x="535" y="460" width="40" height="38.500" rx="6" fill="url(#btn)"/><g fill="#fff"><rect x="541" y="476" width="1" height="9" opacity=".75"/><rect x="544" y="476" width="1.500" height="9" opacity=".8"/><rect x="547.5" y="476" width="1.700" height="9" opacity=".9"/><rect x="550.7" y="476" width="2" height="9"/><path d="M554 476h6v-3.500l8 8-8 8v-3.500h-6z"/></g><rect x="535" y="517" width="40" height="38.500" rx="6" fill="url(#btn)"/><g fill="#fff"><rect x="541" y="533" width="1" height="9" opacity=".75"/><rect x="544" y="533" width="1.500" height="9" opacity=".8"/><rect x="547.5" y="533" width="1.700" height="9" opacity=".9"/><rect x="550.7" y="533" width="2" height="9"/><path d="M554 533h6v-3.500l8 8-8 8v-3.500h-6z"/></g><rect x="535" y="574" width="40" height="38.500" rx="6" fill="url(#btn)"/><g fill="#fff"><rect x="541" y="590" width="1" height="9" opacity=".75"/><rect x="544" y="590" width="1.500" height="9" opacity=".8"/><rect x="547.5" y="590" width="1.700" height="9" opacity=".9"/><rect x="550.7" y="590" width="2" height="9"/><path d="M554 590h6v-3.500l8 8-8 8v-3.500h-6z"/></g><rect x="969" y="460" width="40" height="38.500" rx="6" fill="url(#btn)"/><g fill="#fff"><rect x="975" y="476" width="1" height="9" opacity=".75"/><rect x="978" y="476" width="1.500" height="9" opacity=".8"/><rect x="981.5" y="476" width="1.700" height="9" opacity=".9"/><rect x="984.7" y="476" width="2" height="9"/><path d="M988 476h6v-3.500l8 8-8 8v-3.500h-6z"/></g><rect x="969" y="517" width="40" height="38.500" rx="6" fill="url(#btn)"/><g fill="#fff"><rect x="975" y="533" width="1" height="9" opacity=".75"/><rect x="978" y="533" width="1.500" height="9" opacity=".8"/><rect x="981.5" y="533" width="1.700" height="9" opacity=".9"/><rect x="984.7" y="533" width="2" height="9"/><path d="M988 533h6v-3.500l8 8-8 8v-3.500h-6z"/></g><rect x="969" y="574" width="40" height="38.500" rx="6" fill="url(#btn)"/><g fill="#fff"><rect x="975" y="590" width="1" height="9" opacity=".75"/><rect x="978" y="590" width="1.500" height="9" opacity=".8"/><rect x="981.5" y="590" width="1.700" height="9" opacity=".9"/><rect x="984.7" y="590" width="2" height="9"/><path d="M988 590h6v-3.500l8 8-8 8v-3.500h-6z"/></g></svg>
<div class="wt" style="left:616px;top:373px;width:400px;text-align:center;font-size:12px;line-height:14px;text-decoration:underline">www.sportdata.org</div>
<div class="wt" style="left:635px;top:400px;font-size:14.670px;line-height:17px">SET v 10.2.0 build 1 (2024-06-01 09:26 CET) /</div>
<svg class="ic" style="left:947px;top:398px;width:15px;height:15px" viewBox="0 0 16 16"><use href="#i-db"/></svg>
<div class="wt" style="left:968px;top:400px;font-size:14.670px;line-height:17px">Test</div>
<div class="wt" style="left:616px;top:418px;width:400px;text-align:center;font-size:14.670px;line-height:17px">Administration Mode</div>
<div class="wt" style="left:590px;top:470px;font-size:14.670px;line-height:17px">news and updates</div>
<div class="wt" style="left:590px;top:527px;font-size:14.670px;line-height:17px">online documentation</div>
<div class="wt" style="left:590px;top:584px;font-size:14.670px;line-height:17px">video tutorials</div>
<div class="wt" style="left:1024px;top:470px;font-size:14.670px;line-height:17px">user forum</div>
<div class="wt" style="left:1024px;top:527px;font-size:14.670px;line-height:17px">changelog</div>
<div class="wt" style="left:1024px;top:584px;font-size:14.670px;line-height:17px">contact</div>
<div class="wt" style="left:416px;top:645px;width:800px;text-align:center;font-size:12px;line-height:14px">License: SDIL_Miriam_Hein (expire 2024-12-31)<br>(c)sportdata GmbH &amp; Co KG 2000-2024 (2024-07-14 08:38) v 10.2.0 build 1 (2024-06-01 09:26 CET)</div>
<div class="panel" style="left:1292px;top:28px;width:426px;height:1146px"><div class="hdr"></div></div>
<svg class="ic" style="left:1294px;top:32px;width:16px;height:16px" viewBox="0 0 16 16"><use href="#i-overview"/></svg>
<div class="t" style="left:1315px;top:33px;">Main data / Entries</div>
<svg class="ic" style="left:1675px;top:33px;width:16px;height:14px" viewBox="0 0 16 14"><use href="#i-max"/></svg>
<svg class="ic" style="left:1699px;top:35px;width:10px;height:10px" viewBox="0 0 10 10"><use href="#i-x"/></svg>
<div class="a" style="left:1295px;top:53px;width:421px;height:1119px;border:1px solid #b9b9b9;background:#fff;overflow:hidden" id="rp">
<div class="a" style="left:408px;top:0;width:11px;height:1117px;background:#f0f0f0"></div>
<div class="a" style="left:408px;top:0;width:11px;height:1006px;background:#d4d4d4"></div>
<div class="gh" style="left:10px;top:10px"></div>
<div class="a" style="left:10px;top:10px;width:3px;height:1px;background:#3f7fe0"></div><div class="a" style="left:10px;top:10px;width:1px;height:2px;background:#3f7fe0"></div><div class="a" style="left:395px;top:10px;width:3px;height:1px;background:#3f7fe0"></div>
<div class="t" style="left:21px;top:14px;font-weight:bold">Main data</div>
<svg class="a" style="left:373px;top:14px;width:16px;height:16px" viewBox="0 0 16 16"><circle cx="8" cy="8" r="7.300" fill="#dcdce2" stroke="#a2a2a8" stroke-width=".9"/><path d="M4.800 7.500L8 4.300l3.200 3.200M4.800 11.300L8 8.100l3.200 3.200" fill="none" stroke="#333" stroke-width="1.300"/></svg>
<div class="gb" style="left:10px;top:35px;height:183px"></div>
<svg class="ic" style="left:22px;top:45px;width:16px;height:16px" viewBox="0 0 16 16"><use href="#i-comp"/></svg>
<div class="t" style="left:42px;top:46px;">Competitors</div>
<svg class="ic" style="left:22px;top:63px;width:16px;height:16px" viewBox="0 0 16 16"><use href="#i-coach"/></svg>
<div class="t" style="left:42px;top:64px;">Coaches</div>
<svg class="ic" style="left:22px;top:81px;width:16px;height:16px" viewBox="0 0 16 16"><use href="#i-ref"/></svg>
<div class="t" style="left:42px;top:82px;">Referees</div>
<svg class="ic" style="left:22px;top:99px;width:16px;height:16px" viewBox="0 0 16 16"><use href="#i-off"/></svg>
<div class="t" style="left:42px;top:100px;">Officials</div>
<svg class="ic" style="left:22px;top:117px;width:16px;height:16px" viewBox="0 0 16 16"><use href="#i-club"/></svg>
<div class="t" style="left:42px;top:118px;">Clubs</div>
<svg class="ic" style="left:22px;top:135px;width:16px;height:16px" viewBox="0 0 16 16"><use href="#i-cat1"/></svg>
<div class="t" style="left:42px;top:136px;">Categories</div>
<svg class="ic" style="left:22px;top:153px;width:16px;height:16px" viewBox="0 0 16 16"><use href="#i-nation"/></svg>
<div class="t" style="left:42px;top:154px;">Nations</div>
<svg class="ic" style="left:22px;top:171px;width:16px;height:16px" viewBox="0 0 16 16"><use href="#i-fed"/></svg>
<div class="t" style="left:42px;top:172px;">Federal associations / Regions</div>
<svg class="ic" style="left:22px;top:189px;width:16px;height:16px" viewBox="0 0 16 16"><use href="#i-forms"/></svg>
<div class="t" style="left:42px;top:190px;">Forms</div>
<div class="gh" style="left:10px;top:232px"></div>
<div class="a" style="left:10px;top:232px;width:3px;height:1px;background:#3f7fe0"></div><div class="a" style="left:10px;top:232px;width:1px;height:2px;background:#3f7fe0"></div><div class="a" style="left:395px;top:232px;width:3px;height:1px;background:#3f7fe0"></div>
<div class="t" style="left:21px;top:236px;font-weight:bold">Entries - Overviews / Statistics</div>
<svg class="a" style="left:373px;top:236px;width:16px;height:16px" viewBox="0 0 16 16"><circle cx="8" cy="8" r="7.300" fill="#dcdce2" stroke="#a2a2a8" stroke-width=".9"/><path d="M4.800 7.500L8 4.300l3.200 3.200M4.800 11.300L8 8.100l3.200 3.200" fill="none" stroke="#333" stroke-width="1.300"/></svg>
<div class="gb" style="left:10px;top:257px;height:255px"></div>
<svg class="ic" style="left:22px;top:267px;width:16px;height:16px" viewBox="0 0 16 16"><use href="#i-clip"/></svg>
<div class="t" style="left:42px;top:268px;">All entries</div>
<svg class="ic" style="left:22px;top:285px;width:16px;height:16px" viewBox="0 0 16 16"><use href="#i-wait"/></svg>
<div class="t" style="left:42px;top:286px;">Waitinglist entries</div>
<svg class="ic" style="left:22px;top:303px;width:16px;height:16px" viewBox="0 0 16 16"><use href="#i-clip"/></svg>
<div class="t" style="left:42px;top:304px;">Coach entries</div>
<svg class="ic" style="left:22px;top:321px;width:16px;height:16px" viewBox="0 0 16 16"><use href="#i-clip"/></svg>
<div class="t" style="left:42px;top:322px;">Referee entries</div>
<svg class="ic" style="left:22px;top:339px;width:16px;height:16px" viewBox="0 0 16 16"><use href="#i-clip"/></svg>
<div class="t" style="left:42px;top:340px;">Officials entries</div>
<svg class="ic" style="left:22px;top:357px;width:16px;height:16px" viewBox="0 0 16 16"><use href="#i-clip"/></svg>
<div class="t" style="left:42px;top:358px;">Head of Delegation</div>
<svg class="ic" style="left:22px;top:375px;width:16px;height:16px" viewBox="0 0 16 16"><use href="#i-report"/></svg>
<div class="t" style="left:42px;top:376px;">Clubs and entries</div>
<svg class="ic" style="left:22px;top:393px;width:16px;height:16px" viewBox="0 0 16 16"><use href="#i-report"/></svg>
<div class="t" style="left:42px;top:394px;">States / Regions and entries</div>
<svg class="ic" style="left:22px;top:411px;width:16px;height:16px" viewBox="0 0 16 16"><use href="#i-report"/></svg>
<div class="t" style="left:42px;top:412px;">Nations and entries</div>
<svg class="ic" style="left:22px;top:429px;width:16px;height:16px" viewBox="0 0 16 16"><use href="#i-report"/></svg>
<div class="t" style="left:42px;top:430px;">Categories and entries</div>
<svg class="ic" style="left:22px;top:447px;width:16px;height:16px" viewBox="0 0 16 16"><use href="#i-report"/></svg>
<div class="t" style="left:42px;top:448px;">Competitors in categories</div>
<svg class="ic" style="left:22px;top:465px;width:16px;height:16px" viewBox="0 0 16 16"><use href="#i-report"/></svg>
<div class="t" style="left:42px;top:466px;">Clubs, Competitors, Categories</div>
<svg class="ic" style="left:22px;top:483px;width:16px;height:16px" viewBox="0 0 16 16"><use href="#i-report"/></svg>
<div class="t" style="left:42px;top:484px;">Clubs, Categories, Competitors</div>
<div class="gh" style="left:10px;top:526px"></div>
<div class="a" style="left:10px;top:526px;width:3px;height:1px;background:#3f7fe0"></div><div class="a" style="left:10px;top:526px;width:1px;height:2px;background:#3f7fe0"></div><div class="a" style="left:395px;top:526px;width:3px;height:1px;background:#3f7fe0"></div>
<div class="t" style="left:21px;top:530px;font-weight:bold">Reports</div>
<svg class="a" style="left:373px;top:530px;width:16px;height:16px" viewBox="0 0 16 16"><circle cx="8" cy="8" r="7.300" fill="#dcdce2" stroke="#a2a2a8" stroke-width=".9"/><path d="M4.800 7.500L8 4.300l3.200 3.200M4.800 11.300L8 8.100l3.200 3.200" fill="none" stroke="#333" stroke-width="1.300"/></svg>
<div class="gb" style="left:10px;top:551px;height:471px"></div>
<svg class="ic" style="left:22px;top:561px;width:16px;height:16px" viewBox="0 0 16 16"><use href="#i-report"/></svg>
<div class="t" style="left:42px;top:562px;">Result Book - Countries</div>
<svg class="ic" style="left:22px;top:579px;width:16px;height:16px" viewBox="0 0 16 16"><use href="#i-report"/></svg>
<div class="t" style="left:42px;top:580px;">Result Book - Countries and Clubs</div>
<svg class="ic" style="left:22px;top:597px;width:16px;height:16px" viewBox="0 0 16 16"><use href="#i-report"/></svg>
<div class="t" style="left:42px;top:598px;">Result Book - Clubs</div>
<svg class="ic" style="left:22px;top:633px;width:16px;height:16px" viewBox="0 0 16 16"><use href="#i-report"/></svg>
<div class="t" style="left:42px;top:634px;">Country Entries</div>
<svg class="ic" style="left:22px;top:651px;width:16px;height:16px" viewBox="0 0 16 16"><use href="#i-report"/></svg>
<div class="t" style="left:42px;top:652px;">Club Entries</div>
<svg class="ic" style="left:22px;top:669px;width:16px;height:16px" viewBox="0 0 16 16"><use href="#i-report"/></svg>
<div class="t" style="left:42px;top:670px;letter-spacing:0.131px;">Participation (Total)</div>
<svg class="ic" style="left:22px;top:687px;width:16px;height:16px" viewBox="0 0 16 16"><use href="#i-report"/></svg>
<div class="t" style="left:42px;top:688px;">Participation (Entries By Birthday) by Club</div>
<svg class="ic" style="left:22px;top:705px;width:16px;height:16px" viewBox="0 0 16 16"><use href="#i-report"/></svg>
<div class="t" style="left:42px;top:706px;">Participation (Entries)</div>
<svg class="ic" style="left:22px;top:723px;width:16px;height:16px" viewBox="0 0 16 16"><use href="#i-report"/></svg>
<div class="t" style="left:42px;top:724px;">Participation (Entries) by Club</div>
<svg class="ic" style="left:22px;top:741px;width:16px;height:16px" viewBox="0 0 16 16"><use href="#i-report"/></svg>
<div class="t" style="left:42px;top:742px;">Participation (Entries By Birthday)</div>
<svg class="ic" style="left:22px;top:759px;width:16px;height:16px" viewBox="0 0 16 16"><use href="#i-report"/></svg>
<div class="t" style="left:42px;top:760px;">Participation (Entries By Birthday) by Club</div>
<svg class="ic" style="left:22px;top:777px;width:16px;height:16px" viewBox="0 0 16 16"><use href="#i-report"/></svg>
<div class="t" style="left:42px;top:778px;letter-spacing:0.168px;">Participation Count</div>
<svg class="ic" style="left:22px;top:795px;width:16px;height:16px" viewBox="0 0 16 16"><use href="#i-report"/></svg>
<div class="t" style="left:42px;top:796px;letter-spacing:0.148px;">Participation Count by Club</div>
<svg class="ic" style="left:22px;top:813px;width:16px;height:16px" viewBox="0 0 16 16"><use href="#i-report"/></svg>
<div class="t" style="left:42px;top:814px;letter-spacing:-0.120px;">Statistics</div>
<svg class="ic" style="left:22px;top:831px;width:16px;height:16px" viewBox="0 0 16 16"><use href="#i-report"/></svg>
<div class="t" style="left:42px;top:832px;letter-spacing:0.177px;">Participation Count - Officials</div>
<svg class="ic" style="left:22px;top:849px;width:16px;height:16px" viewBox="0 0 16 16"><use href="#i-report"/></svg>
<div class="t" style="left:42px;top:850px;">Officials per Category</div>
<svg class="ic" style="left:22px;top:867px;width:16px;height:16px" viewBox="0 0 16 16"><use href="#i-report"/></svg>
<div class="t" style="left:42px;top:868px;letter-spacing:0.057px;">Officials per Category by Club</div>
<svg class="ic" style="left:22px;top:885px;width:16px;height:16px" viewBox="0 0 16 16"><use href="#i-report"/></svg>
<div class="t" style="left:42px;top:886px;letter-spacing:0.119px;">Officials per Country</div>
<svg class="ic" style="left:22px;top:903px;width:16px;height:16px" viewBox="0 0 16 16"><use href="#i-report"/></svg>
<div class="t" style="left:42px;top:904px;letter-spacing:0.067px;">Officials per Club</div>
<svg class="ic" style="left:22px;top:921px;width:16px;height:16px" viewBox="0 0 16 16"><use href="#i-report"/></svg>
<div class="t" style="left:42px;top:922px;">Officials by Other Role</div>
<svg class="ic" style="left:22px;top:939px;width:16px;height:16px" viewBox="0 0 16 16"><use href="#i-report"/></svg>
<div class="t" style="left:42px;top:940px;">Entries in Categories - Country</div>
<svg class="ic" style="left:22px;top:957px;width:16px;height:16px" viewBox="0 0 16 16"><use href="#i-report"/></svg>
<div class="t" style="left:42px;top:958px;letter-spacing:-0.095px;">Entries in Categories</div>
<svg class="ic" style="left:22px;top:975px;width:16px;height:16px" viewBox="0 0 16 16"><use href="#i-report"/></svg>
<div class="t" style="left:42px;top:976px;letter-spacing:-0.048px;">Entries in Categories 1 Athlete</div>
<svg class="ic" style="left:22px;top:993px;width:16px;height:16px" viewBox="0 0 16 16"><use href="#i-report"/></svg>
<div class="t" style="left:42px;top:994px;">Entries in Categories - Weigh-In</div>
<div class="gh" style="left:10px;top:1036px"></div>
<div class="a" style="left:10px;top:1036px;width:3px;height:1px;background:#3f7fe0"></div><div class="a" style="left:10px;top:1036px;width:1px;height:2px;background:#3f7fe0"></div><div class="a" style="left:395px;top:1036px;width:3px;height:1px;background:#3f7fe0"></div>
<div class="t" style="left:21px;top:1040px;font-weight:bold">Entries - Chart</div>
<svg class="a" style="left:373px;top:1040px;width:16px;height:16px" viewBox="0 0 16 16"><circle cx="8" cy="8" r="7.300" fill="#dcdce2" stroke="#a2a2a8" stroke-width=".9"/><path d="M4.800 7.500L8 4.300l3.200 3.200M4.800 11.300L8 8.100l3.200 3.200" fill="none" stroke="#333" stroke-width="1.300"/></svg>
<div class="gb" style="left:10px;top:1061px;height:186px"></div>
<svg class="ic" style="left:22px;top:1071px;width:16px;height:16px" viewBox="0 0 16 16"><use href="#i-bars"/></svg>
<div class="t" style="left:42px;top:1072px;">Clubs and entries</div>
<svg class="ic" style="left:22px;top:1089px;width:16px;height:16px" viewBox="0 0 16 16"><use href="#i-pie"/></svg>
<div class="t" style="left:42px;top:1090px;">Clubs and entries</div>
<svg class="ic" style="left:22px;top:1107px;width:16px;height:16px" viewBox="0 0 16 16"><use href="#i-bars"/></svg>
<div class="t" style="left:42px;top:1108px;">States / Regions and entries</div>
</div>
<div class="panel" style="left:0;top:1039px;width:1286px;height:135px"><div class="hdr" style="height:24px;background:linear-gradient(90deg,#fff 0%,#fdfdfd 45%,#f2f2f2 100%)"></div></div>
<svg class="ic" style="left:2px;top:1043px;width:16px;height:16px" viewBox="0 0 16 16"><use href="#i-console"/></svg>
<div class="t" style="left:23px;top:1044px;">Message Console</div>
<svg class="ic" style="left:1243px;top:1043px;width:16px;height:16px" viewBox="0 0 16 16"><use href="#i-trash"/></svg>
<svg class="ic" style="left:1265px;top:1044px;width:16px;height:14px" viewBox="0 0 16 14"><use href="#i-max"/></svg>
<div class="a" style="left:3px;top:1064px;width:1281px;height:107px;border:1px solid #b9b9b9;background:#f2f2f2"></div>
<div class="a" style="left:0;top:1177px;width:1720px;height:23px;background:linear-gradient(180deg,#d9d9df 0,#e6e6ea 40%,#eaeaee 100%);border-top:1px solid #c4c4c8"></div>
<div class="t" style="left:5px;top:1180px;font-weight:bold;font-size:10.400px">2024-07-14 08:43:06:321 [INFO] Messages found 0</div>
<svg class="a" style="left:1706px;top:1186px;width:14px;height:14px" viewBox="0 0 14 14"><g fill="#a9a9a9"><rect x="10" y="2" width="2" height="2"/><rect x="6" y="6" width="2" height="2"/><rect x="10" y="6" width="2" height="2"/><rect x="2" y="10" width="2" height="2"/><rect x="6" y="10" width="2" height="2"/><rect x="10" y="10" width="2" height="2"/></g></svg>
<div class="menu" style="left:116px;top:65px;width:123px;height:145px"></div>
<svg class="ic" style="left:123px;top:72px;width:16px;height:16px" viewBox="0 0 16 16"><use href="#i-editev"/></svg>
<div class="t" style="left:145px;top:73px;">Edit event</div>
<div class="sep" style="left:117px;width:121px;top:95px"></div>
<svg class="ic" style="left:123px;top:103px;width:16px;height:16px" viewBox="0 0 16 16"><use href="#i-chgev"/></svg>
<div class="t" style="left:145px;top:104px;">Change event</div>
<div class="sep" style="left:117px;width:121px;top:127px"></div>
<div class="a" style="left:117px;top:131px;width:121px;height:22px;background:#2675bf"></div>
<svg class="ic" style="left:123px;top:134px;width:16px;height:16px" viewBox="0 0 16 16"><use href="#i-report"/></svg>
<div class="t" style="left:145px;top:135px;color:#fff">Reports</div>
<div class="a" style="left:226px;top:138px;width:0;height:0;border-left:5px solid #fff;border-top:4px solid transparent;border-bottom:4px solid transparent"></div>
<div class="sep" style="left:117px;width:121px;top:158px"></div>
<svg class="ic" style="left:123px;top:165px;width:16px;height:16px" viewBox="0 0 16 16"><use href="#i-expand"/></svg>
<div class="t" style="left:145px;top:166px;">Expand all</div>
<svg class="ic" style="left:123px;top:187px;width:16px;height:16px" viewBox="0 0 16 16"><use href="#i-collapse"/></svg>
<div class="t" style="left:145px;top:188px;">Collapse all</div>
<div class="menu" style="left:234px;top:128px;width:270px;height:536px"></div>
<svg class="ic" style="left:241px;top:134px;width:16px;height:16px" viewBox="0 0 16 16"><use href="#i-report"/></svg>
<div class="t" style="left:263px;top:135px;">Result Book - Countries</div>
<svg class="ic" style="left:241px;top:156px;width:16px;height:16px" viewBox="0 0 16 16"><use href="#i-report"/></svg>
<div class="t" style="left:263px;top:157px;">Result Book - Countries and Clubs</div>
<svg class="ic" style="left:241px;top:178px;width:16px;height:16px" viewBox="0 0 16 16"><use href="#i-report"/></svg>
<div class="t" style="left:263px;top:179px;">Result Book - Clubs</div>
<div class="sep" style="left:235px;width:268px;top:201px"></div>
<svg class="ic" style="left:241px;top:209px;width:16px;height:16px" viewBox="0 0 16 16"><use href="#i-report"/></svg>
<div class="t" style="left:263px;top:210px;">Country Entries</div>
<svg class="ic" style="left:241px;top:231px;width:16px;height:16px" viewBox="0 0 16 16"><use href="#i-report"/></svg>
<div class="t" style="left:263px;top:232px;">Club Entries</div>
<div class="sep" style="left:235px;width:268px;top:254px"></div>
<svg class="ic" style="left:241px;top:262px;width:16px;height:16px" viewBox="0 0 16 16"><use href="#i-report"/></svg>
<div class="t" style="left:263px;top:263px;letter-spacing:0.131px;">Participation (Total)</div>
<svg class="ic" style="left:241px;top:284px;width:16px;height:16px" viewBox="0 0 16 16"><use href="#i-report"/></svg>
<div class="t" style="left:263px;top:285px;letter-spacing:0.138px;">Participation (Total) by Club</div>
<svg class="ic" style="left:241px;top:306px;width:16px;height:16px" viewBox="0 0 16 16"><use href="#i-report"/></svg>
<div class="t" style="left:263px;top:307px;">Participation (Entries)</div>
<svg class="ic" style="left:241px;top:328px;width:16px;height:16px" viewBox="0 0 16 16"><use href="#i-report"/></svg>
<div class="t" style="left:263px;top:329px;">Participation (Entries) by Club</div>
<svg class="ic" style="left:241px;top:350px;width:16px;height:16px" viewBox="0 0 16 16"><use href="#i-report"/></svg>
<div class="t" style="left:263px;top:351px;">Participation (Entries By Birthday)</div>
<svg class="ic" style="left:241px;top:372px;width:16px;height:16px" viewBox="0 0 16 16"><use href="#i-report"/></svg>
<div class="t" style="left:263px;top:373px;">Participation (Entries By Birthday) by Club</div>
<div class="sep" style="left:235px;width:268px;top:395px"></div>
<svg class="ic" style="left:241px;top:403px;width:16px;height:16px" viewBox="0 0 16 16"><use href="#i-report"/></svg>
<div class="t" style="left:263px;top:404px;letter-spacing:0.168px;">Participation Count</div>
<svg class="ic" style="left:241px;top:425px;width:16px;height:16px" viewBox="0 0 16 16"><use href="#i-report"/></svg>
<div class="t" style="left:263px;top:426px;letter-spacing:0.148px;">Participation Count by Club</div>
<svg class="ic" style="left:241px;top:447px;width:16px;height:16px" viewBox="0 0 16 16"><use href="#i-report"/></svg>
<div class="t" style="left:263px;top:448px;letter-spacing:-0.120px;">Statistics</div>
<div class="sep" style="left:235px;width:268px;top:470px"></div>
<svg class="ic" style="left:241px;top:478px;width:16px;height:16px" viewBox="0 0 16 16"><use href="#i-report"/></svg>
<div class="t" style="left:263px;top:479px;letter-spacing:0.177px;">Participation Count - Officials</div>
<svg class="ic" style="left:241px;top:500px;width:16px;height:16px" viewBox="0 0 16 16"><use href="#i-report"/></svg>
<div class="t" style="left:263px;top:501px;">Officials per Category</div>
<svg class="ic" style="left:241px;top:522px;width:16px;height:16px" viewBox="0 0 16 16"><use href="#i-report"/></svg>
<div class="t" style="left:263px;top:523px;letter-spacing:0.057px;">Officials per Category by Club</div>
<svg class="ic" style="left:241px;top:544px;width:16px;height:16px" viewBox="0 0 16 16"><use href="#i-report"/></svg>
<div class="t" style="left:263px;top:545px;letter-spacing:0.119px;">Officials per Country</div>
<svg class="ic" style="left:241px;top:566px;width:16px;height:16px" viewBox="0 0 16 16"><use href="#i-report"/></svg>
<div class="t" style="left:263px;top:567px;letter-spacing:0.067px;">Officials per Club</div>
<div class="sep" style="left:235px;width:268px;top:589px"></div>
<svg class="ic" style="left:241px;top:597px;width:16px;height:16px" viewBox="0 0 16 16"><use href="#i-report"/></svg>
<div class="t" style="left:263px;top:598px;letter-spacing:-0.095px;">Entries in Categories</div>
<svg class="ic" style="left:241px;top:619px;width:16px;height:16px" viewBox="0 0 16 16"><use href="#i-report"/></svg>
<div class="t" style="left:263px;top:620px;letter-spacing:-0.048px;">Entries in Categories 1 Athlete</div>
<div class="a" style="left:235px;top:638px;width:268px;height:22px;background:#2675bf"></div>
<svg class="ic" style="left:241px;top:641px;width:16px;height:16px" viewBox="0 0 16 16"><use href="#i-report"/></svg>
<div class="t" style="left:263px;top:642px;color:#fff">Entries in Categories - Weigh-In</div>
<svg class="a" style="left:430px;top:340px;width:340px;height:340px" viewBox="430 340 340 340"><defs><mask id="am" maskUnits="userSpaceOnUse" x="430" y="340" width="340" height="340"><rect x="430" y="340" width="340" height="340" fill="#fff"/><path d="M481 635L567.500 405L592 520L709 546.500Z" fill="#000"/></mask></defs><path d="M481 635L567.500 405L592 520L709 546.500Z" fill="none" stroke="#fff" stroke-opacity=".8" stroke-width="15" stroke-linejoin="miter" stroke-miterlimit="20" mask="url(#am)"/><path d="M481 635L567.500 405L592 520L709 546.500Z" fill="#ec6767" fill-opacity=".79"/></svg>
</body></html>
